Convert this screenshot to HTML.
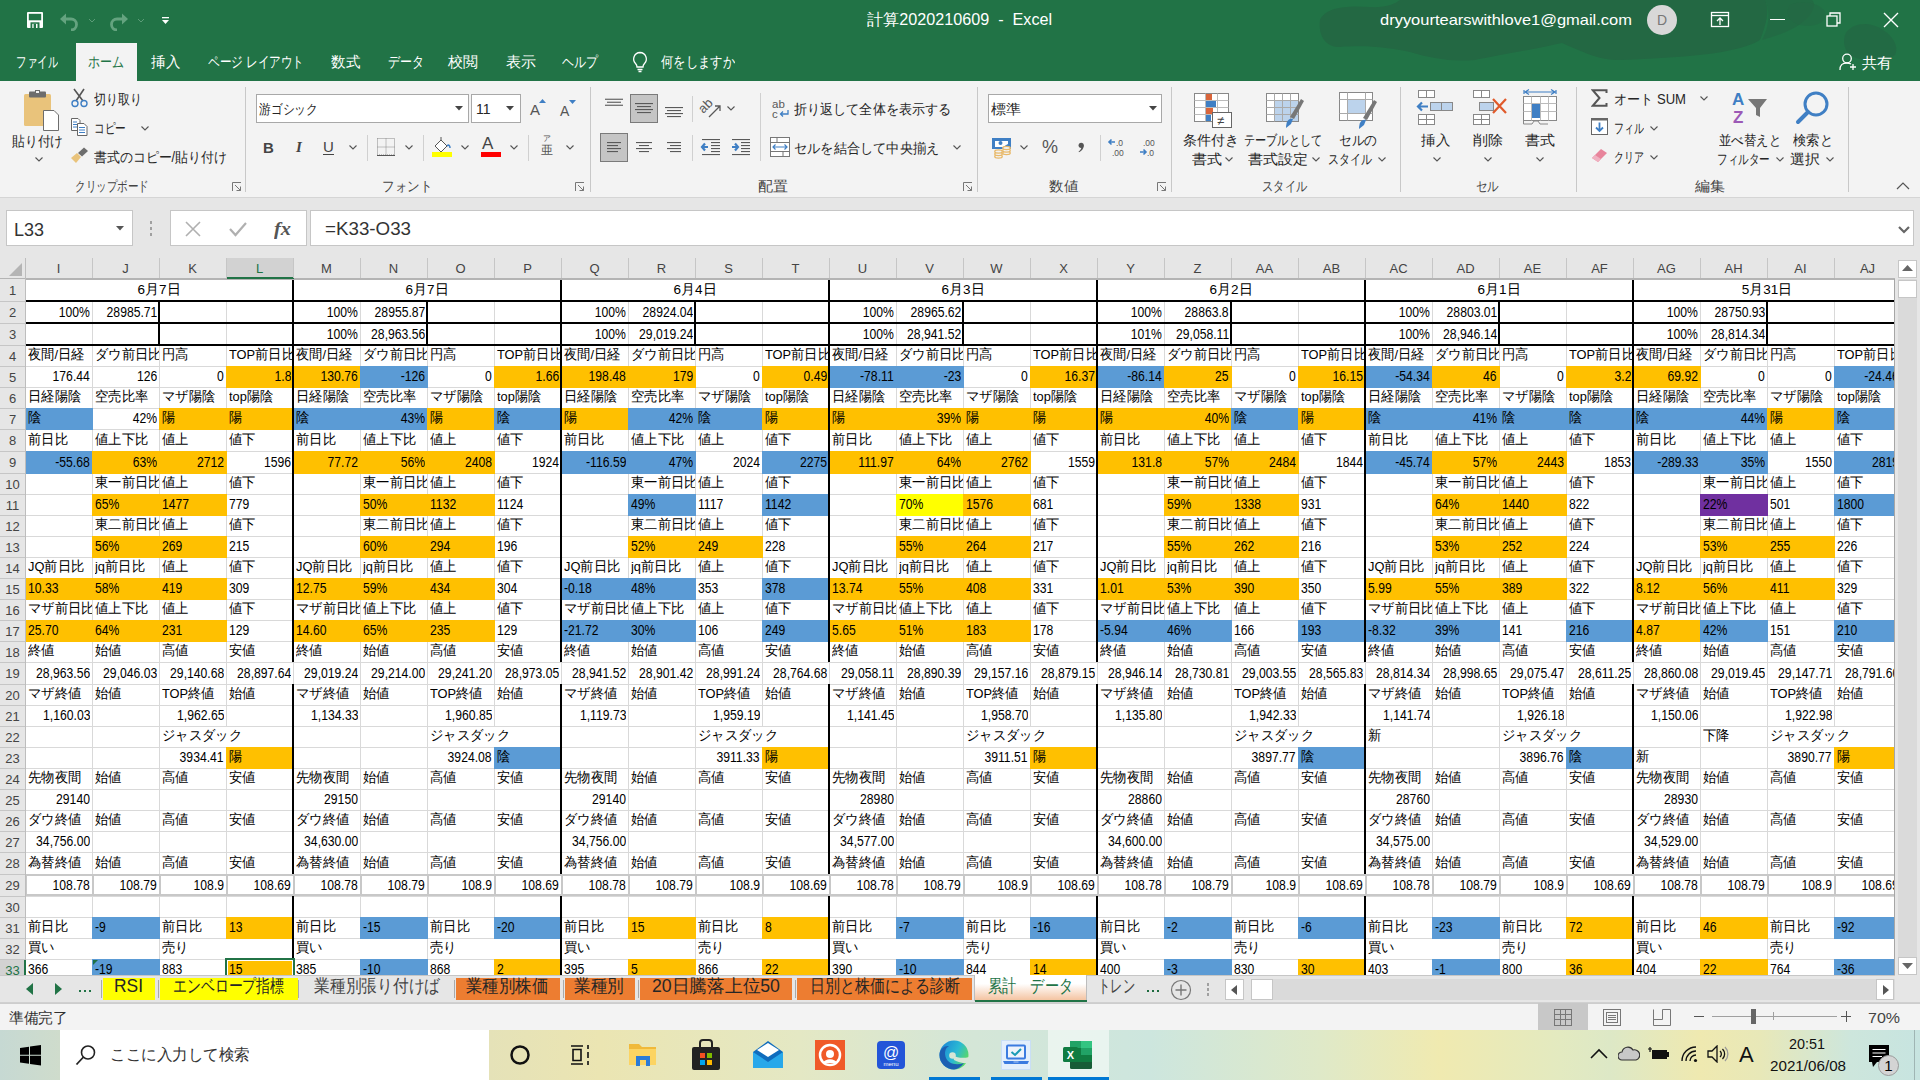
<!DOCTYPE html><html><head><meta charset="utf-8"><style>body{margin:0;width:1920px;height:1080px;overflow:hidden;position:relative;font-family:"Liberation Sans", sans-serif;background:#fff}.c{position:absolute;font-size:13.5px;color:#000;white-space:nowrap;overflow:hidden;display:flex;align-items:center;justify-content:flex-start;box-sizing:border-box;padding-bottom:2px}.c.r{justify-content:flex-end}.c.m{justify-content:center}.c span{display:inline-block;transform:scaleX(.95);transform-origin:0 50%}.c.m span{transform-origin:50% 50%}.n span{font-size:14px;transform:scaleX(.87);transform-origin:0 50%}.r.n span{transform-origin:100% 50%}.h{position:absolute;height:21px;line-height:22px;font-size:13px;text-align:center}</style></head><body><div style="position:absolute;left:0;top:258px;width:1895px;height:717px;overflow:hidden;background:#fff"><svg width="1920" height="717" style="position:absolute;left:0;top:0" shape-rendering="crispEdges"><line x1="26" y1="43.5" x2="1895" y2="43.5" stroke="#d9d9d9" stroke-width="1"/><line x1="26" y1="65.5" x2="1895" y2="65.5" stroke="#d9d9d9" stroke-width="1"/><line x1="26" y1="87.5" x2="1895" y2="87.5" stroke="#d9d9d9" stroke-width="1"/><line x1="26" y1="108.5" x2="1895" y2="108.5" stroke="#d9d9d9" stroke-width="1"/><line x1="26" y1="129.5" x2="1895" y2="129.5" stroke="#d9d9d9" stroke-width="1"/><line x1="26" y1="150.5" x2="1895" y2="150.5" stroke="#d9d9d9" stroke-width="1"/><line x1="26" y1="171.5" x2="1895" y2="171.5" stroke="#d9d9d9" stroke-width="1"/><line x1="26" y1="193.5" x2="1895" y2="193.5" stroke="#d9d9d9" stroke-width="1"/><line x1="26" y1="215.5" x2="1895" y2="215.5" stroke="#d9d9d9" stroke-width="1"/><line x1="26" y1="236.5" x2="1895" y2="236.5" stroke="#d9d9d9" stroke-width="1"/><line x1="26" y1="257.5" x2="1895" y2="257.5" stroke="#d9d9d9" stroke-width="1"/><line x1="26" y1="278.5" x2="1895" y2="278.5" stroke="#d9d9d9" stroke-width="1"/><line x1="26" y1="299.5" x2="1895" y2="299.5" stroke="#d9d9d9" stroke-width="1"/><line x1="26" y1="320.5" x2="1895" y2="320.5" stroke="#d9d9d9" stroke-width="1"/><line x1="26" y1="341.5" x2="1895" y2="341.5" stroke="#d9d9d9" stroke-width="1"/><line x1="26" y1="362.5" x2="1895" y2="362.5" stroke="#d9d9d9" stroke-width="1"/><line x1="26" y1="383.5" x2="1895" y2="383.5" stroke="#d9d9d9" stroke-width="1"/><line x1="26" y1="404.5" x2="1895" y2="404.5" stroke="#d9d9d9" stroke-width="1"/><line x1="26" y1="426.5" x2="1895" y2="426.5" stroke="#d9d9d9" stroke-width="1"/><line x1="26" y1="447.5" x2="1895" y2="447.5" stroke="#d9d9d9" stroke-width="1"/><line x1="26" y1="468.5" x2="1895" y2="468.5" stroke="#d9d9d9" stroke-width="1"/><line x1="26" y1="489.5" x2="1895" y2="489.5" stroke="#d9d9d9" stroke-width="1"/><line x1="26" y1="510.5" x2="1895" y2="510.5" stroke="#d9d9d9" stroke-width="1"/><line x1="26" y1="531.5" x2="1895" y2="531.5" stroke="#d9d9d9" stroke-width="1"/><line x1="26" y1="552.5" x2="1895" y2="552.5" stroke="#d9d9d9" stroke-width="1"/><line x1="26" y1="573.5" x2="1895" y2="573.5" stroke="#d9d9d9" stroke-width="1"/><line x1="26" y1="594.5" x2="1895" y2="594.5" stroke="#d9d9d9" stroke-width="1"/><line x1="26" y1="616.5" x2="1895" y2="616.5" stroke="#d9d9d9" stroke-width="1"/><line x1="26" y1="638.5" x2="1895" y2="638.5" stroke="#d9d9d9" stroke-width="1"/><line x1="26" y1="659.5" x2="1895" y2="659.5" stroke="#d9d9d9" stroke-width="1"/><line x1="26" y1="680.5" x2="1895" y2="680.5" stroke="#d9d9d9" stroke-width="1"/><line x1="26" y1="701.5" x2="1895" y2="701.5" stroke="#d9d9d9" stroke-width="1"/><line x1="26" y1="722.5" x2="1895" y2="722.5" stroke="#d9d9d9" stroke-width="1"/><line x1="92.5" y1="21" x2="92.5" y2="717" stroke="#d9d9d9" stroke-width="1"/><line x1="159.5" y1="21" x2="159.5" y2="717" stroke="#d9d9d9" stroke-width="1"/><line x1="226.5" y1="21" x2="226.5" y2="717" stroke="#d9d9d9" stroke-width="1"/><line x1="293.5" y1="21" x2="293.5" y2="717" stroke="#d9d9d9" stroke-width="1"/><line x1="360.5" y1="21" x2="360.5" y2="717" stroke="#d9d9d9" stroke-width="1"/><line x1="427.5" y1="21" x2="427.5" y2="717" stroke="#d9d9d9" stroke-width="1"/><line x1="494.5" y1="21" x2="494.5" y2="717" stroke="#d9d9d9" stroke-width="1"/><line x1="561.5" y1="21" x2="561.5" y2="717" stroke="#d9d9d9" stroke-width="1"/><line x1="628.5" y1="21" x2="628.5" y2="717" stroke="#d9d9d9" stroke-width="1"/><line x1="695.5" y1="21" x2="695.5" y2="717" stroke="#d9d9d9" stroke-width="1"/><line x1="762.5" y1="21" x2="762.5" y2="717" stroke="#d9d9d9" stroke-width="1"/><line x1="829.5" y1="21" x2="829.5" y2="717" stroke="#d9d9d9" stroke-width="1"/><line x1="896.5" y1="21" x2="896.5" y2="717" stroke="#d9d9d9" stroke-width="1"/><line x1="963.5" y1="21" x2="963.5" y2="717" stroke="#d9d9d9" stroke-width="1"/><line x1="1030.5" y1="21" x2="1030.5" y2="717" stroke="#d9d9d9" stroke-width="1"/><line x1="1097.5" y1="21" x2="1097.5" y2="717" stroke="#d9d9d9" stroke-width="1"/><line x1="1164.5" y1="21" x2="1164.5" y2="717" stroke="#d9d9d9" stroke-width="1"/><line x1="1231.5" y1="21" x2="1231.5" y2="717" stroke="#d9d9d9" stroke-width="1"/><line x1="1298.5" y1="21" x2="1298.5" y2="717" stroke="#d9d9d9" stroke-width="1"/><line x1="1365.5" y1="21" x2="1365.5" y2="717" stroke="#d9d9d9" stroke-width="1"/><line x1="1432.5" y1="21" x2="1432.5" y2="717" stroke="#d9d9d9" stroke-width="1"/><line x1="1499.5" y1="21" x2="1499.5" y2="717" stroke="#d9d9d9" stroke-width="1"/><line x1="1566.5" y1="21" x2="1566.5" y2="717" stroke="#d9d9d9" stroke-width="1"/><line x1="1633.5" y1="21" x2="1633.5" y2="717" stroke="#d9d9d9" stroke-width="1"/><line x1="1700.5" y1="21" x2="1700.5" y2="717" stroke="#d9d9d9" stroke-width="1"/><line x1="1767.5" y1="21" x2="1767.5" y2="717" stroke="#d9d9d9" stroke-width="1"/><line x1="1834.5" y1="21" x2="1834.5" y2="717" stroke="#d9d9d9" stroke-width="1"/><line x1="1901.5" y1="21" x2="1901.5" y2="717" stroke="#d9d9d9" stroke-width="1"/></svg></div><div style="position:absolute;left:26px;top:280px;width:1869px;height:21px;background:#fff"></div><div style="position:absolute;left:226px;top:727px;width:1px;height:20px;background:#fff"></div><div style="position:absolute;left:92px;top:939px;width:1px;height:20px;background:#fff"></div><div style="position:absolute;left:226px;top:939px;width:1px;height:20px;background:#fff"></div><div style="position:absolute;left:494px;top:727px;width:1px;height:20px;background:#fff"></div><div style="position:absolute;left:360px;top:939px;width:1px;height:20px;background:#fff"></div><div style="position:absolute;left:494px;top:939px;width:1px;height:20px;background:#fff"></div><div style="position:absolute;left:762px;top:727px;width:1px;height:20px;background:#fff"></div><div style="position:absolute;left:628px;top:939px;width:1px;height:20px;background:#fff"></div><div style="position:absolute;left:762px;top:939px;width:1px;height:20px;background:#fff"></div><div style="position:absolute;left:1030px;top:727px;width:1px;height:20px;background:#fff"></div><div style="position:absolute;left:896px;top:939px;width:1px;height:20px;background:#fff"></div><div style="position:absolute;left:1030px;top:939px;width:1px;height:20px;background:#fff"></div><div style="position:absolute;left:1298px;top:727px;width:1px;height:20px;background:#fff"></div><div style="position:absolute;left:1164px;top:939px;width:1px;height:20px;background:#fff"></div><div style="position:absolute;left:1298px;top:939px;width:1px;height:20px;background:#fff"></div><div style="position:absolute;left:1566px;top:727px;width:1px;height:20px;background:#fff"></div><div style="position:absolute;left:1432px;top:939px;width:1px;height:20px;background:#fff"></div><div style="position:absolute;left:1566px;top:939px;width:1px;height:20px;background:#fff"></div><div style="position:absolute;left:1834px;top:727px;width:1px;height:20px;background:#fff"></div><div style="position:absolute;left:1700px;top:939px;width:1px;height:20px;background:#fff"></div><div style="position:absolute;left:1834px;top:939px;width:1px;height:20px;background:#fff"></div><div style="position:absolute;left:226px;top:366px;width:68px;height:22px;background:#ffc000"></div><div style="position:absolute;left:25px;top:408px;width:68px;height:22px;background:#5b9bd5"></div><div style="position:absolute;left:159px;top:408px;width:68px;height:22px;background:#ffc000"></div><div style="position:absolute;left:226px;top:408px;width:68px;height:22px;background:#ffc000"></div><div style="position:absolute;left:25px;top:451px;width:68px;height:23px;background:#5b9bd5"></div><div style="position:absolute;left:92px;top:451px;width:68px;height:23px;background:#ffc000"></div><div style="position:absolute;left:159px;top:451px;width:68px;height:23px;background:#ffc000"></div><div style="position:absolute;left:92px;top:494px;width:68px;height:22px;background:#ffc000"></div><div style="position:absolute;left:159px;top:494px;width:68px;height:22px;background:#ffc000"></div><div style="position:absolute;left:92px;top:536px;width:68px;height:22px;background:#ffc000"></div><div style="position:absolute;left:159px;top:536px;width:68px;height:22px;background:#ffc000"></div><div style="position:absolute;left:25px;top:578px;width:68px;height:22px;background:#ffc000"></div><div style="position:absolute;left:92px;top:578px;width:68px;height:22px;background:#ffc000"></div><div style="position:absolute;left:159px;top:578px;width:68px;height:22px;background:#ffc000"></div><div style="position:absolute;left:25px;top:620px;width:68px;height:22px;background:#ffc000"></div><div style="position:absolute;left:92px;top:620px;width:68px;height:22px;background:#ffc000"></div><div style="position:absolute;left:159px;top:620px;width:68px;height:22px;background:#ffc000"></div><div style="position:absolute;left:226px;top:747px;width:68px;height:22px;background:#ffc000"></div><div style="position:absolute;left:92px;top:917px;width:68px;height:22px;background:#5b9bd5"></div><div style="position:absolute;left:226px;top:917px;width:68px;height:22px;background:#ffc000"></div><div style="position:absolute;left:92px;top:959px;width:68px;height:22px;background:#5b9bd5"></div><div style="position:absolute;left:226px;top:959px;width:68px;height:22px;background:#ffc000"></div><div style="position:absolute;left:293px;top:366px;width:68px;height:22px;background:#ffc000"></div><div style="position:absolute;left:360px;top:366px;width:68px;height:22px;background:#5b9bd5"></div><div style="position:absolute;left:494px;top:366px;width:68px;height:22px;background:#ffc000"></div><div style="position:absolute;left:293px;top:408px;width:68px;height:22px;background:#5b9bd5"></div><div style="position:absolute;left:360px;top:408px;width:68px;height:22px;background:#5b9bd5"></div><div style="position:absolute;left:427px;top:408px;width:68px;height:22px;background:#ffc000"></div><div style="position:absolute;left:494px;top:408px;width:68px;height:22px;background:#5b9bd5"></div><div style="position:absolute;left:293px;top:451px;width:68px;height:23px;background:#ffc000"></div><div style="position:absolute;left:360px;top:451px;width:68px;height:23px;background:#ffc000"></div><div style="position:absolute;left:427px;top:451px;width:68px;height:23px;background:#ffc000"></div><div style="position:absolute;left:360px;top:494px;width:68px;height:22px;background:#ffc000"></div><div style="position:absolute;left:427px;top:494px;width:68px;height:22px;background:#ffc000"></div><div style="position:absolute;left:360px;top:536px;width:68px;height:22px;background:#ffc000"></div><div style="position:absolute;left:427px;top:536px;width:68px;height:22px;background:#ffc000"></div><div style="position:absolute;left:293px;top:578px;width:68px;height:22px;background:#ffc000"></div><div style="position:absolute;left:360px;top:578px;width:68px;height:22px;background:#ffc000"></div><div style="position:absolute;left:427px;top:578px;width:68px;height:22px;background:#ffc000"></div><div style="position:absolute;left:293px;top:620px;width:68px;height:22px;background:#ffc000"></div><div style="position:absolute;left:360px;top:620px;width:68px;height:22px;background:#ffc000"></div><div style="position:absolute;left:427px;top:620px;width:68px;height:22px;background:#ffc000"></div><div style="position:absolute;left:494px;top:747px;width:68px;height:22px;background:#5b9bd5"></div><div style="position:absolute;left:360px;top:917px;width:68px;height:22px;background:#5b9bd5"></div><div style="position:absolute;left:494px;top:917px;width:68px;height:22px;background:#5b9bd5"></div><div style="position:absolute;left:360px;top:959px;width:68px;height:22px;background:#5b9bd5"></div><div style="position:absolute;left:494px;top:959px;width:68px;height:22px;background:#ffc000"></div><div style="position:absolute;left:561px;top:366px;width:68px;height:22px;background:#ffc000"></div><div style="position:absolute;left:628px;top:366px;width:68px;height:22px;background:#ffc000"></div><div style="position:absolute;left:762px;top:366px;width:68px;height:22px;background:#ffc000"></div><div style="position:absolute;left:561px;top:408px;width:68px;height:22px;background:#ffc000"></div><div style="position:absolute;left:628px;top:408px;width:68px;height:22px;background:#5b9bd5"></div><div style="position:absolute;left:695px;top:408px;width:68px;height:22px;background:#5b9bd5"></div><div style="position:absolute;left:762px;top:408px;width:68px;height:22px;background:#ffc000"></div><div style="position:absolute;left:561px;top:451px;width:68px;height:23px;background:#5b9bd5"></div><div style="position:absolute;left:628px;top:451px;width:68px;height:23px;background:#5b9bd5"></div><div style="position:absolute;left:762px;top:451px;width:68px;height:23px;background:#5b9bd5"></div><div style="position:absolute;left:628px;top:494px;width:68px;height:22px;background:#5b9bd5"></div><div style="position:absolute;left:762px;top:494px;width:68px;height:22px;background:#5b9bd5"></div><div style="position:absolute;left:628px;top:536px;width:68px;height:22px;background:#ffc000"></div><div style="position:absolute;left:695px;top:536px;width:68px;height:22px;background:#ffc000"></div><div style="position:absolute;left:561px;top:578px;width:68px;height:22px;background:#5b9bd5"></div><div style="position:absolute;left:628px;top:578px;width:68px;height:22px;background:#5b9bd5"></div><div style="position:absolute;left:762px;top:578px;width:68px;height:22px;background:#5b9bd5"></div><div style="position:absolute;left:561px;top:620px;width:68px;height:22px;background:#5b9bd5"></div><div style="position:absolute;left:628px;top:620px;width:68px;height:22px;background:#5b9bd5"></div><div style="position:absolute;left:762px;top:620px;width:68px;height:22px;background:#5b9bd5"></div><div style="position:absolute;left:762px;top:747px;width:68px;height:22px;background:#ffc000"></div><div style="position:absolute;left:628px;top:917px;width:68px;height:22px;background:#ffc000"></div><div style="position:absolute;left:762px;top:917px;width:68px;height:22px;background:#ffc000"></div><div style="position:absolute;left:628px;top:959px;width:68px;height:22px;background:#ffc000"></div><div style="position:absolute;left:762px;top:959px;width:68px;height:22px;background:#ffc000"></div><div style="position:absolute;left:829px;top:366px;width:68px;height:22px;background:#5b9bd5"></div><div style="position:absolute;left:896px;top:366px;width:68px;height:22px;background:#5b9bd5"></div><div style="position:absolute;left:1030px;top:366px;width:68px;height:22px;background:#ffc000"></div><div style="position:absolute;left:829px;top:408px;width:68px;height:22px;background:#ffc000"></div><div style="position:absolute;left:896px;top:408px;width:68px;height:22px;background:#ffc000"></div><div style="position:absolute;left:963px;top:408px;width:68px;height:22px;background:#ffc000"></div><div style="position:absolute;left:1030px;top:408px;width:68px;height:22px;background:#ffc000"></div><div style="position:absolute;left:829px;top:451px;width:68px;height:23px;background:#ffc000"></div><div style="position:absolute;left:896px;top:451px;width:68px;height:23px;background:#ffc000"></div><div style="position:absolute;left:963px;top:451px;width:68px;height:23px;background:#ffc000"></div><div style="position:absolute;left:896px;top:494px;width:68px;height:22px;background:#ffff00"></div><div style="position:absolute;left:963px;top:494px;width:68px;height:22px;background:#ffc000"></div><div style="position:absolute;left:896px;top:536px;width:68px;height:22px;background:#ffc000"></div><div style="position:absolute;left:963px;top:536px;width:68px;height:22px;background:#ffc000"></div><div style="position:absolute;left:829px;top:578px;width:68px;height:22px;background:#ffc000"></div><div style="position:absolute;left:896px;top:578px;width:68px;height:22px;background:#ffc000"></div><div style="position:absolute;left:963px;top:578px;width:68px;height:22px;background:#ffc000"></div><div style="position:absolute;left:829px;top:620px;width:68px;height:22px;background:#ffc000"></div><div style="position:absolute;left:896px;top:620px;width:68px;height:22px;background:#ffc000"></div><div style="position:absolute;left:963px;top:620px;width:68px;height:22px;background:#ffc000"></div><div style="position:absolute;left:1030px;top:747px;width:68px;height:22px;background:#ffc000"></div><div style="position:absolute;left:896px;top:917px;width:68px;height:22px;background:#5b9bd5"></div><div style="position:absolute;left:1030px;top:917px;width:68px;height:22px;background:#5b9bd5"></div><div style="position:absolute;left:896px;top:959px;width:68px;height:22px;background:#5b9bd5"></div><div style="position:absolute;left:1030px;top:959px;width:68px;height:22px;background:#ffc000"></div><div style="position:absolute;left:1097px;top:366px;width:68px;height:22px;background:#5b9bd5"></div><div style="position:absolute;left:1164px;top:366px;width:68px;height:22px;background:#ffc000"></div><div style="position:absolute;left:1298px;top:366px;width:68px;height:22px;background:#ffc000"></div><div style="position:absolute;left:1097px;top:408px;width:68px;height:22px;background:#ffc000"></div><div style="position:absolute;left:1164px;top:408px;width:68px;height:22px;background:#ffc000"></div><div style="position:absolute;left:1231px;top:408px;width:68px;height:22px;background:#5b9bd5"></div><div style="position:absolute;left:1298px;top:408px;width:68px;height:22px;background:#ffc000"></div><div style="position:absolute;left:1097px;top:451px;width:68px;height:23px;background:#ffc000"></div><div style="position:absolute;left:1164px;top:451px;width:68px;height:23px;background:#ffc000"></div><div style="position:absolute;left:1231px;top:451px;width:68px;height:23px;background:#ffc000"></div><div style="position:absolute;left:1164px;top:494px;width:68px;height:22px;background:#ffc000"></div><div style="position:absolute;left:1231px;top:494px;width:68px;height:22px;background:#ffc000"></div><div style="position:absolute;left:1164px;top:536px;width:68px;height:22px;background:#ffc000"></div><div style="position:absolute;left:1231px;top:536px;width:68px;height:22px;background:#ffc000"></div><div style="position:absolute;left:1097px;top:578px;width:68px;height:22px;background:#ffc000"></div><div style="position:absolute;left:1164px;top:578px;width:68px;height:22px;background:#ffc000"></div><div style="position:absolute;left:1231px;top:578px;width:68px;height:22px;background:#ffc000"></div><div style="position:absolute;left:1097px;top:620px;width:68px;height:22px;background:#5b9bd5"></div><div style="position:absolute;left:1164px;top:620px;width:68px;height:22px;background:#5b9bd5"></div><div style="position:absolute;left:1298px;top:620px;width:68px;height:22px;background:#5b9bd5"></div><div style="position:absolute;left:1298px;top:747px;width:68px;height:22px;background:#5b9bd5"></div><div style="position:absolute;left:1164px;top:917px;width:68px;height:22px;background:#5b9bd5"></div><div style="position:absolute;left:1298px;top:917px;width:68px;height:22px;background:#5b9bd5"></div><div style="position:absolute;left:1164px;top:959px;width:68px;height:22px;background:#5b9bd5"></div><div style="position:absolute;left:1298px;top:959px;width:68px;height:22px;background:#ffc000"></div><div style="position:absolute;left:1365px;top:366px;width:68px;height:22px;background:#5b9bd5"></div><div style="position:absolute;left:1432px;top:366px;width:68px;height:22px;background:#ffc000"></div><div style="position:absolute;left:1566px;top:366px;width:68px;height:22px;background:#ffc000"></div><div style="position:absolute;left:1365px;top:408px;width:68px;height:22px;background:#5b9bd5"></div><div style="position:absolute;left:1432px;top:408px;width:68px;height:22px;background:#5b9bd5"></div><div style="position:absolute;left:1499px;top:408px;width:68px;height:22px;background:#5b9bd5"></div><div style="position:absolute;left:1566px;top:408px;width:68px;height:22px;background:#5b9bd5"></div><div style="position:absolute;left:1365px;top:451px;width:68px;height:23px;background:#5b9bd5"></div><div style="position:absolute;left:1432px;top:451px;width:68px;height:23px;background:#ffc000"></div><div style="position:absolute;left:1499px;top:451px;width:68px;height:23px;background:#ffc000"></div><div style="position:absolute;left:1432px;top:494px;width:68px;height:22px;background:#ffc000"></div><div style="position:absolute;left:1499px;top:494px;width:68px;height:22px;background:#ffc000"></div><div style="position:absolute;left:1432px;top:536px;width:68px;height:22px;background:#ffc000"></div><div style="position:absolute;left:1499px;top:536px;width:68px;height:22px;background:#ffc000"></div><div style="position:absolute;left:1365px;top:578px;width:68px;height:22px;background:#ffc000"></div><div style="position:absolute;left:1432px;top:578px;width:68px;height:22px;background:#ffc000"></div><div style="position:absolute;left:1499px;top:578px;width:68px;height:22px;background:#ffc000"></div><div style="position:absolute;left:1365px;top:620px;width:68px;height:22px;background:#5b9bd5"></div><div style="position:absolute;left:1432px;top:620px;width:68px;height:22px;background:#5b9bd5"></div><div style="position:absolute;left:1566px;top:620px;width:68px;height:22px;background:#5b9bd5"></div><div style="position:absolute;left:1566px;top:747px;width:68px;height:22px;background:#5b9bd5"></div><div style="position:absolute;left:1432px;top:917px;width:68px;height:22px;background:#5b9bd5"></div><div style="position:absolute;left:1566px;top:917px;width:68px;height:22px;background:#ffc000"></div><div style="position:absolute;left:1432px;top:959px;width:68px;height:22px;background:#5b9bd5"></div><div style="position:absolute;left:1566px;top:959px;width:68px;height:22px;background:#ffc000"></div><div style="position:absolute;left:1633px;top:366px;width:68px;height:22px;background:#ffc000"></div><div style="position:absolute;left:1834px;top:366px;width:68px;height:22px;background:#5b9bd5"></div><div style="position:absolute;left:1633px;top:408px;width:68px;height:22px;background:#5b9bd5"></div><div style="position:absolute;left:1700px;top:408px;width:68px;height:22px;background:#5b9bd5"></div><div style="position:absolute;left:1767px;top:408px;width:68px;height:22px;background:#ffc000"></div><div style="position:absolute;left:1834px;top:408px;width:68px;height:22px;background:#5b9bd5"></div><div style="position:absolute;left:1633px;top:451px;width:68px;height:23px;background:#5b9bd5"></div><div style="position:absolute;left:1700px;top:451px;width:68px;height:23px;background:#5b9bd5"></div><div style="position:absolute;left:1834px;top:451px;width:68px;height:23px;background:#5b9bd5"></div><div style="position:absolute;left:1700px;top:494px;width:68px;height:22px;background:#7030a0"></div><div style="position:absolute;left:1834px;top:494px;width:68px;height:22px;background:#5b9bd5"></div><div style="position:absolute;left:1700px;top:536px;width:68px;height:22px;background:#ffc000"></div><div style="position:absolute;left:1767px;top:536px;width:68px;height:22px;background:#ffc000"></div><div style="position:absolute;left:1633px;top:578px;width:68px;height:22px;background:#ffc000"></div><div style="position:absolute;left:1700px;top:578px;width:68px;height:22px;background:#ffc000"></div><div style="position:absolute;left:1767px;top:578px;width:68px;height:22px;background:#ffc000"></div><div style="position:absolute;left:1633px;top:620px;width:68px;height:22px;background:#ffc000"></div><div style="position:absolute;left:1700px;top:620px;width:68px;height:22px;background:#5b9bd5"></div><div style="position:absolute;left:1834px;top:620px;width:68px;height:22px;background:#5b9bd5"></div><div style="position:absolute;left:1834px;top:747px;width:68px;height:22px;background:#ffc000"></div><div style="position:absolute;left:1700px;top:917px;width:68px;height:22px;background:#ffc000"></div><div style="position:absolute;left:1834px;top:917px;width:68px;height:22px;background:#5b9bd5"></div><div style="position:absolute;left:1700px;top:959px;width:68px;height:22px;background:#ffc000"></div><div style="position:absolute;left:1834px;top:959px;width:68px;height:22px;background:#5b9bd5"></div><div class="c m" style="left:25px;top:279px;width:268px;height:23px">6月7日</div><div class="c n r" style="left:27px;top:301px;width:63px;height:23px"><span>100%</span></div><div class="c n r" style="left:94px;top:301px;width:63px;height:23px"><span>28985.71</span></div><div class="c" style="left:28px;top:345px;width:64px;height:22px"><span>夜間/日経</span></div><div class="c" style="left:95px;top:345px;width:64px;height:22px"><span>ダウ前日比</span></div><div class="c" style="left:162px;top:345px;width:64px;height:22px"><span>円高</span></div><div class="c" style="left:229px;top:345px;width:64px;height:22px"><span>TOP前日比</span></div><div class="c n r" style="left:27px;top:366px;width:63px;height:22px"><span>176.44</span></div><div class="c n r" style="left:94px;top:366px;width:63px;height:22px"><span>126</span></div><div class="c n r" style="left:161px;top:366px;width:63px;height:22px"><span>0</span></div><div class="c n r" style="left:228px;top:366px;width:63px;height:22px"><span>1.8</span></div><div class="c" style="left:28px;top:387px;width:64px;height:22px"><span>日経陽陰</span></div><div class="c" style="left:95px;top:387px;width:64px;height:22px"><span>空売比率</span></div><div class="c" style="left:162px;top:387px;width:64px;height:22px"><span>マザ陽陰</span></div><div class="c" style="left:229px;top:387px;width:64px;height:22px"><span>top陽陰</span></div><div class="c" style="left:28px;top:408px;width:64px;height:22px"><span>陰</span></div><div class="c n r" style="left:94px;top:408px;width:63px;height:22px"><span>42%</span></div><div class="c" style="left:162px;top:408px;width:64px;height:22px"><span>陽</span></div><div class="c" style="left:229px;top:408px;width:64px;height:22px"><span>陽</span></div><div class="c" style="left:28px;top:429px;width:64px;height:23px"><span>前日比</span></div><div class="c" style="left:95px;top:429px;width:64px;height:23px"><span>値上下比</span></div><div class="c" style="left:162px;top:429px;width:64px;height:23px"><span>値上</span></div><div class="c" style="left:229px;top:429px;width:64px;height:23px"><span>値下</span></div><div class="c n r" style="left:27px;top:451px;width:63px;height:23px"><span>-55.68</span></div><div class="c n r" style="left:94px;top:451px;width:63px;height:23px"><span>63%</span></div><div class="c n r" style="left:161px;top:451px;width:63px;height:23px"><span>2712</span></div><div class="c n r" style="left:228px;top:451px;width:63px;height:23px"><span>1596</span></div><div class="c" style="left:95px;top:473px;width:64px;height:22px"><span>東一前日比</span></div><div class="c" style="left:162px;top:473px;width:64px;height:22px"><span>値上</span></div><div class="c" style="left:229px;top:473px;width:64px;height:22px"><span>値下</span></div><div class="c n" style="left:95px;top:494px;width:64px;height:22px"><span>65%</span></div><div class="c n" style="left:162px;top:494px;width:64px;height:22px"><span>1477</span></div><div class="c n" style="left:229px;top:494px;width:64px;height:22px"><span>779</span></div><div class="c" style="left:95px;top:515px;width:64px;height:22px"><span>東二前日比</span></div><div class="c" style="left:162px;top:515px;width:64px;height:22px"><span>値上</span></div><div class="c" style="left:229px;top:515px;width:64px;height:22px"><span>値下</span></div><div class="c n" style="left:95px;top:536px;width:64px;height:22px"><span>56%</span></div><div class="c n" style="left:162px;top:536px;width:64px;height:22px"><span>269</span></div><div class="c n" style="left:229px;top:536px;width:64px;height:22px"><span>215</span></div><div class="c" style="left:28px;top:557px;width:64px;height:22px"><span>JQ前日比</span></div><div class="c" style="left:95px;top:557px;width:64px;height:22px"><span>jq前日比</span></div><div class="c" style="left:162px;top:557px;width:64px;height:22px"><span>値上</span></div><div class="c" style="left:229px;top:557px;width:64px;height:22px"><span>値下</span></div><div class="c n" style="left:28px;top:578px;width:64px;height:22px"><span>10.33</span></div><div class="c n" style="left:95px;top:578px;width:64px;height:22px"><span>58%</span></div><div class="c n" style="left:162px;top:578px;width:64px;height:22px"><span>419</span></div><div class="c n" style="left:229px;top:578px;width:64px;height:22px"><span>309</span></div><div class="c" style="left:28px;top:599px;width:64px;height:22px"><span>マザ前日比</span></div><div class="c" style="left:95px;top:599px;width:64px;height:22px"><span>値上下比</span></div><div class="c" style="left:162px;top:599px;width:64px;height:22px"><span>値上</span></div><div class="c" style="left:229px;top:599px;width:64px;height:22px"><span>値下</span></div><div class="c n" style="left:28px;top:620px;width:64px;height:22px"><span>25.70</span></div><div class="c n" style="left:95px;top:620px;width:64px;height:22px"><span>64%</span></div><div class="c n" style="left:162px;top:620px;width:64px;height:22px"><span>231</span></div><div class="c n" style="left:229px;top:620px;width:64px;height:22px"><span>129</span></div><div class="c" style="left:28px;top:641px;width:64px;height:22px"><span>終値</span></div><div class="c" style="left:95px;top:641px;width:64px;height:22px"><span>始値</span></div><div class="c" style="left:162px;top:641px;width:64px;height:22px"><span>高値</span></div><div class="c" style="left:229px;top:641px;width:64px;height:22px"><span>安値</span></div><div class="c n r" style="left:27px;top:662px;width:63px;height:23px"><span>28,963.56</span></div><div class="c n r" style="left:94px;top:662px;width:63px;height:23px"><span>29,046.03</span></div><div class="c n r" style="left:161px;top:662px;width:63px;height:23px"><span>29,140.68</span></div><div class="c n r" style="left:228px;top:662px;width:63px;height:23px"><span>28,897.64</span></div><div class="c" style="left:28px;top:684px;width:64px;height:22px"><span>マザ終値</span></div><div class="c" style="left:95px;top:684px;width:64px;height:22px"><span>始値</span></div><div class="c" style="left:162px;top:684px;width:64px;height:22px"><span>TOP終値</span></div><div class="c" style="left:229px;top:684px;width:64px;height:22px"><span>始値</span></div><div class="c n r" style="left:27px;top:705px;width:63px;height:22px"><span>1,160.03</span></div><div class="c n r" style="left:161px;top:705px;width:63px;height:22px"><span>1,962.65</span></div><div class="c" style="left:162px;top:726px;width:131px;height:22px"><span>ジャスダック</span></div><div class="c n r" style="left:161px;top:747px;width:63px;height:22px"><span>3934.41</span></div><div class="c" style="left:229px;top:747px;width:64px;height:22px"><span>陽</span></div><div class="c" style="left:28px;top:768px;width:64px;height:22px"><span>先物夜間</span></div><div class="c" style="left:95px;top:768px;width:64px;height:22px"><span>始値</span></div><div class="c" style="left:162px;top:768px;width:64px;height:22px"><span>高値</span></div><div class="c" style="left:229px;top:768px;width:64px;height:22px"><span>安値</span></div><div class="c n r" style="left:27px;top:789px;width:63px;height:22px"><span>29140</span></div><div class="c" style="left:28px;top:810px;width:64px;height:22px"><span>ダウ終値</span></div><div class="c" style="left:95px;top:810px;width:64px;height:22px"><span>始値</span></div><div class="c" style="left:162px;top:810px;width:64px;height:22px"><span>高値</span></div><div class="c" style="left:229px;top:810px;width:64px;height:22px"><span>安値</span></div><div class="c n r" style="left:27px;top:831px;width:63px;height:22px"><span>34,756.00</span></div><div class="c" style="left:28px;top:852px;width:64px;height:23px"><span>為替終値</span></div><div class="c" style="left:95px;top:852px;width:64px;height:23px"><span>始値</span></div><div class="c" style="left:162px;top:852px;width:64px;height:23px"><span>高値</span></div><div class="c" style="left:229px;top:852px;width:64px;height:23px"><span>安値</span></div><div class="c n t r" style="left:27px;top:874px;width:63px;height:23px"><span>108.78</span></div><div class="c n t r" style="left:94px;top:874px;width:63px;height:23px"><span>108.79</span></div><div class="c n t r" style="left:161px;top:874px;width:63px;height:23px"><span>108.9</span></div><div class="c n t r" style="left:228px;top:874px;width:63px;height:23px"><span>108.69</span></div><div class="c" style="left:28px;top:917px;width:64px;height:22px"><span>前日比</span></div><div class="c n" style="left:95px;top:917px;width:64px;height:22px"><span>-9</span></div><div class="c" style="left:162px;top:917px;width:64px;height:22px"><span>前日比</span></div><div class="c n" style="left:229px;top:917px;width:64px;height:22px"><span>13</span></div><div class="c" style="left:28px;top:938px;width:64px;height:22px"><span>買い</span></div><div class="c" style="left:162px;top:938px;width:64px;height:22px"><span>売り</span></div><div class="c n" style="left:28px;top:959px;width:64px;height:22px"><span>366</span></div><div class="c n" style="left:95px;top:959px;width:64px;height:22px"><span>-19</span></div><div class="c n" style="left:162px;top:959px;width:64px;height:22px"><span>883</span></div><div class="c n" style="left:229px;top:959px;width:64px;height:22px"><span>15</span></div><div class="c m" style="left:293px;top:279px;width:268px;height:23px">6月7日</div><div class="c n r" style="left:295px;top:301px;width:63px;height:23px"><span>100%</span></div><div class="c n r" style="left:362px;top:301px;width:63px;height:23px"><span>28955.87</span></div><div class="c n r" style="left:295px;top:323px;width:63px;height:23px"><span>100%</span></div><div class="c n r" style="left:362px;top:323px;width:63px;height:23px"><span>28,963.56</span></div><div class="c" style="left:296px;top:345px;width:64px;height:22px"><span>夜間/日経</span></div><div class="c" style="left:363px;top:345px;width:64px;height:22px"><span>ダウ前日比</span></div><div class="c" style="left:430px;top:345px;width:64px;height:22px"><span>円高</span></div><div class="c" style="left:497px;top:345px;width:64px;height:22px"><span>TOP前日比</span></div><div class="c n r" style="left:295px;top:366px;width:63px;height:22px"><span>130.76</span></div><div class="c n r" style="left:362px;top:366px;width:63px;height:22px"><span>-126</span></div><div class="c n r" style="left:429px;top:366px;width:63px;height:22px"><span>0</span></div><div class="c n r" style="left:496px;top:366px;width:63px;height:22px"><span>1.66</span></div><div class="c" style="left:296px;top:387px;width:64px;height:22px"><span>日経陽陰</span></div><div class="c" style="left:363px;top:387px;width:64px;height:22px"><span>空売比率</span></div><div class="c" style="left:430px;top:387px;width:64px;height:22px"><span>マザ陽陰</span></div><div class="c" style="left:497px;top:387px;width:64px;height:22px"><span>top陽陰</span></div><div class="c" style="left:296px;top:408px;width:64px;height:22px"><span>陰</span></div><div class="c n r" style="left:362px;top:408px;width:63px;height:22px"><span>43%</span></div><div class="c" style="left:430px;top:408px;width:64px;height:22px"><span>陽</span></div><div class="c" style="left:497px;top:408px;width:64px;height:22px"><span>陰</span></div><div class="c" style="left:296px;top:429px;width:64px;height:23px"><span>前日比</span></div><div class="c" style="left:363px;top:429px;width:64px;height:23px"><span>値上下比</span></div><div class="c" style="left:430px;top:429px;width:64px;height:23px"><span>値上</span></div><div class="c" style="left:497px;top:429px;width:64px;height:23px"><span>値下</span></div><div class="c n r" style="left:295px;top:451px;width:63px;height:23px"><span>77.72</span></div><div class="c n r" style="left:362px;top:451px;width:63px;height:23px"><span>56%</span></div><div class="c n r" style="left:429px;top:451px;width:63px;height:23px"><span>2408</span></div><div class="c n r" style="left:496px;top:451px;width:63px;height:23px"><span>1924</span></div><div class="c" style="left:363px;top:473px;width:64px;height:22px"><span>東一前日比</span></div><div class="c" style="left:430px;top:473px;width:64px;height:22px"><span>値上</span></div><div class="c" style="left:497px;top:473px;width:64px;height:22px"><span>値下</span></div><div class="c n" style="left:363px;top:494px;width:64px;height:22px"><span>50%</span></div><div class="c n" style="left:430px;top:494px;width:64px;height:22px"><span>1132</span></div><div class="c n" style="left:497px;top:494px;width:64px;height:22px"><span>1124</span></div><div class="c" style="left:363px;top:515px;width:64px;height:22px"><span>東二前日比</span></div><div class="c" style="left:430px;top:515px;width:64px;height:22px"><span>値上</span></div><div class="c" style="left:497px;top:515px;width:64px;height:22px"><span>値下</span></div><div class="c n" style="left:363px;top:536px;width:64px;height:22px"><span>60%</span></div><div class="c n" style="left:430px;top:536px;width:64px;height:22px"><span>294</span></div><div class="c n" style="left:497px;top:536px;width:64px;height:22px"><span>196</span></div><div class="c" style="left:296px;top:557px;width:64px;height:22px"><span>JQ前日比</span></div><div class="c" style="left:363px;top:557px;width:64px;height:22px"><span>jq前日比</span></div><div class="c" style="left:430px;top:557px;width:64px;height:22px"><span>値上</span></div><div class="c" style="left:497px;top:557px;width:64px;height:22px"><span>値下</span></div><div class="c n" style="left:296px;top:578px;width:64px;height:22px"><span>12.75</span></div><div class="c n" style="left:363px;top:578px;width:64px;height:22px"><span>59%</span></div><div class="c n" style="left:430px;top:578px;width:64px;height:22px"><span>434</span></div><div class="c n" style="left:497px;top:578px;width:64px;height:22px"><span>304</span></div><div class="c" style="left:296px;top:599px;width:64px;height:22px"><span>マザ前日比</span></div><div class="c" style="left:363px;top:599px;width:64px;height:22px"><span>値上下比</span></div><div class="c" style="left:430px;top:599px;width:64px;height:22px"><span>値上</span></div><div class="c" style="left:497px;top:599px;width:64px;height:22px"><span>値下</span></div><div class="c n" style="left:296px;top:620px;width:64px;height:22px"><span>14.60</span></div><div class="c n" style="left:363px;top:620px;width:64px;height:22px"><span>65%</span></div><div class="c n" style="left:430px;top:620px;width:64px;height:22px"><span>235</span></div><div class="c n" style="left:497px;top:620px;width:64px;height:22px"><span>129</span></div><div class="c" style="left:296px;top:641px;width:64px;height:22px"><span>終値</span></div><div class="c" style="left:363px;top:641px;width:64px;height:22px"><span>始値</span></div><div class="c" style="left:430px;top:641px;width:64px;height:22px"><span>高値</span></div><div class="c" style="left:497px;top:641px;width:64px;height:22px"><span>安値</span></div><div class="c n r" style="left:295px;top:662px;width:63px;height:23px"><span>29,019.24</span></div><div class="c n r" style="left:362px;top:662px;width:63px;height:23px"><span>29,214.00</span></div><div class="c n r" style="left:429px;top:662px;width:63px;height:23px"><span>29,241.20</span></div><div class="c n r" style="left:496px;top:662px;width:63px;height:23px"><span>28,973.05</span></div><div class="c" style="left:296px;top:684px;width:64px;height:22px"><span>マザ終値</span></div><div class="c" style="left:363px;top:684px;width:64px;height:22px"><span>始値</span></div><div class="c" style="left:430px;top:684px;width:64px;height:22px"><span>TOP終値</span></div><div class="c" style="left:497px;top:684px;width:64px;height:22px"><span>始値</span></div><div class="c n r" style="left:295px;top:705px;width:63px;height:22px"><span>1,134.33</span></div><div class="c n r" style="left:429px;top:705px;width:63px;height:22px"><span>1,960.85</span></div><div class="c" style="left:430px;top:726px;width:131px;height:22px"><span>ジャスダック</span></div><div class="c n r" style="left:429px;top:747px;width:63px;height:22px"><span>3924.08</span></div><div class="c" style="left:497px;top:747px;width:64px;height:22px"><span>陰</span></div><div class="c" style="left:296px;top:768px;width:64px;height:22px"><span>先物夜間</span></div><div class="c" style="left:363px;top:768px;width:64px;height:22px"><span>始値</span></div><div class="c" style="left:430px;top:768px;width:64px;height:22px"><span>高値</span></div><div class="c" style="left:497px;top:768px;width:64px;height:22px"><span>安値</span></div><div class="c n r" style="left:295px;top:789px;width:63px;height:22px"><span>29150</span></div><div class="c" style="left:296px;top:810px;width:64px;height:22px"><span>ダウ終値</span></div><div class="c" style="left:363px;top:810px;width:64px;height:22px"><span>始値</span></div><div class="c" style="left:430px;top:810px;width:64px;height:22px"><span>高値</span></div><div class="c" style="left:497px;top:810px;width:64px;height:22px"><span>安値</span></div><div class="c n r" style="left:295px;top:831px;width:63px;height:22px"><span>34,630.00</span></div><div class="c" style="left:296px;top:852px;width:64px;height:23px"><span>為替終値</span></div><div class="c" style="left:363px;top:852px;width:64px;height:23px"><span>始値</span></div><div class="c" style="left:430px;top:852px;width:64px;height:23px"><span>高値</span></div><div class="c" style="left:497px;top:852px;width:64px;height:23px"><span>安値</span></div><div class="c n t r" style="left:295px;top:874px;width:63px;height:23px"><span>108.78</span></div><div class="c n t r" style="left:362px;top:874px;width:63px;height:23px"><span>108.79</span></div><div class="c n t r" style="left:429px;top:874px;width:63px;height:23px"><span>108.9</span></div><div class="c n t r" style="left:496px;top:874px;width:63px;height:23px"><span>108.69</span></div><div class="c" style="left:296px;top:917px;width:64px;height:22px"><span>前日比</span></div><div class="c n" style="left:363px;top:917px;width:64px;height:22px"><span>-15</span></div><div class="c" style="left:430px;top:917px;width:64px;height:22px"><span>前日比</span></div><div class="c n" style="left:497px;top:917px;width:64px;height:22px"><span>-20</span></div><div class="c" style="left:296px;top:938px;width:64px;height:22px"><span>買い</span></div><div class="c" style="left:430px;top:938px;width:64px;height:22px"><span>売り</span></div><div class="c n" style="left:296px;top:959px;width:64px;height:22px"><span>385</span></div><div class="c n" style="left:363px;top:959px;width:64px;height:22px"><span>-10</span></div><div class="c n" style="left:430px;top:959px;width:64px;height:22px"><span>868</span></div><div class="c n" style="left:497px;top:959px;width:64px;height:22px"><span>2</span></div><div class="c m" style="left:561px;top:279px;width:268px;height:23px">6月4日</div><div class="c n r" style="left:563px;top:301px;width:63px;height:23px"><span>100%</span></div><div class="c n r" style="left:630px;top:301px;width:63px;height:23px"><span>28924.04</span></div><div class="c n r" style="left:563px;top:323px;width:63px;height:23px"><span>100%</span></div><div class="c n r" style="left:630px;top:323px;width:63px;height:23px"><span>29,019.24</span></div><div class="c" style="left:564px;top:345px;width:64px;height:22px"><span>夜間/日経</span></div><div class="c" style="left:631px;top:345px;width:64px;height:22px"><span>ダウ前日比</span></div><div class="c" style="left:698px;top:345px;width:64px;height:22px"><span>円高</span></div><div class="c" style="left:765px;top:345px;width:64px;height:22px"><span>TOP前日比</span></div><div class="c n r" style="left:563px;top:366px;width:63px;height:22px"><span>198.48</span></div><div class="c n r" style="left:630px;top:366px;width:63px;height:22px"><span>179</span></div><div class="c n r" style="left:697px;top:366px;width:63px;height:22px"><span>0</span></div><div class="c n r" style="left:764px;top:366px;width:63px;height:22px"><span>0.49</span></div><div class="c" style="left:564px;top:387px;width:64px;height:22px"><span>日経陽陰</span></div><div class="c" style="left:631px;top:387px;width:64px;height:22px"><span>空売比率</span></div><div class="c" style="left:698px;top:387px;width:64px;height:22px"><span>マザ陽陰</span></div><div class="c" style="left:765px;top:387px;width:64px;height:22px"><span>top陽陰</span></div><div class="c" style="left:564px;top:408px;width:64px;height:22px"><span>陽</span></div><div class="c n r" style="left:630px;top:408px;width:63px;height:22px"><span>42%</span></div><div class="c" style="left:698px;top:408px;width:64px;height:22px"><span>陰</span></div><div class="c" style="left:765px;top:408px;width:64px;height:22px"><span>陽</span></div><div class="c" style="left:564px;top:429px;width:64px;height:23px"><span>前日比</span></div><div class="c" style="left:631px;top:429px;width:64px;height:23px"><span>値上下比</span></div><div class="c" style="left:698px;top:429px;width:64px;height:23px"><span>値上</span></div><div class="c" style="left:765px;top:429px;width:64px;height:23px"><span>値下</span></div><div class="c n r" style="left:563px;top:451px;width:63px;height:23px"><span>-116.59</span></div><div class="c n r" style="left:630px;top:451px;width:63px;height:23px"><span>47%</span></div><div class="c n r" style="left:697px;top:451px;width:63px;height:23px"><span>2024</span></div><div class="c n r" style="left:764px;top:451px;width:63px;height:23px"><span>2275</span></div><div class="c" style="left:631px;top:473px;width:64px;height:22px"><span>東一前日比</span></div><div class="c" style="left:698px;top:473px;width:64px;height:22px"><span>値上</span></div><div class="c" style="left:765px;top:473px;width:64px;height:22px"><span>値下</span></div><div class="c n" style="left:631px;top:494px;width:64px;height:22px"><span>49%</span></div><div class="c n" style="left:698px;top:494px;width:64px;height:22px"><span>1117</span></div><div class="c n" style="left:765px;top:494px;width:64px;height:22px"><span>1142</span></div><div class="c" style="left:631px;top:515px;width:64px;height:22px"><span>東二前日比</span></div><div class="c" style="left:698px;top:515px;width:64px;height:22px"><span>値上</span></div><div class="c" style="left:765px;top:515px;width:64px;height:22px"><span>値下</span></div><div class="c n" style="left:631px;top:536px;width:64px;height:22px"><span>52%</span></div><div class="c n" style="left:698px;top:536px;width:64px;height:22px"><span>249</span></div><div class="c n" style="left:765px;top:536px;width:64px;height:22px"><span>228</span></div><div class="c" style="left:564px;top:557px;width:64px;height:22px"><span>JQ前日比</span></div><div class="c" style="left:631px;top:557px;width:64px;height:22px"><span>jq前日比</span></div><div class="c" style="left:698px;top:557px;width:64px;height:22px"><span>値上</span></div><div class="c" style="left:765px;top:557px;width:64px;height:22px"><span>値下</span></div><div class="c n" style="left:564px;top:578px;width:64px;height:22px"><span>-0.18</span></div><div class="c n" style="left:631px;top:578px;width:64px;height:22px"><span>48%</span></div><div class="c n" style="left:698px;top:578px;width:64px;height:22px"><span>353</span></div><div class="c n" style="left:765px;top:578px;width:64px;height:22px"><span>378</span></div><div class="c" style="left:564px;top:599px;width:64px;height:22px"><span>マザ前日比</span></div><div class="c" style="left:631px;top:599px;width:64px;height:22px"><span>値上下比</span></div><div class="c" style="left:698px;top:599px;width:64px;height:22px"><span>値上</span></div><div class="c" style="left:765px;top:599px;width:64px;height:22px"><span>値下</span></div><div class="c n" style="left:564px;top:620px;width:64px;height:22px"><span>-21.72</span></div><div class="c n" style="left:631px;top:620px;width:64px;height:22px"><span>30%</span></div><div class="c n" style="left:698px;top:620px;width:64px;height:22px"><span>106</span></div><div class="c n" style="left:765px;top:620px;width:64px;height:22px"><span>249</span></div><div class="c" style="left:564px;top:641px;width:64px;height:22px"><span>終値</span></div><div class="c" style="left:631px;top:641px;width:64px;height:22px"><span>始値</span></div><div class="c" style="left:698px;top:641px;width:64px;height:22px"><span>高値</span></div><div class="c" style="left:765px;top:641px;width:64px;height:22px"><span>安値</span></div><div class="c n r" style="left:563px;top:662px;width:63px;height:23px"><span>28,941.52</span></div><div class="c n r" style="left:630px;top:662px;width:63px;height:23px"><span>28,901.42</span></div><div class="c n r" style="left:697px;top:662px;width:63px;height:23px"><span>28,991.24</span></div><div class="c n r" style="left:764px;top:662px;width:63px;height:23px"><span>28,764.68</span></div><div class="c" style="left:564px;top:684px;width:64px;height:22px"><span>マザ終値</span></div><div class="c" style="left:631px;top:684px;width:64px;height:22px"><span>始値</span></div><div class="c" style="left:698px;top:684px;width:64px;height:22px"><span>TOP終値</span></div><div class="c" style="left:765px;top:684px;width:64px;height:22px"><span>始値</span></div><div class="c n r" style="left:563px;top:705px;width:63px;height:22px"><span>1,119.73</span></div><div class="c n r" style="left:697px;top:705px;width:63px;height:22px"><span>1,959.19</span></div><div class="c" style="left:698px;top:726px;width:131px;height:22px"><span>ジャスダック</span></div><div class="c n r" style="left:697px;top:747px;width:63px;height:22px"><span>3911.33</span></div><div class="c" style="left:765px;top:747px;width:64px;height:22px"><span>陽</span></div><div class="c" style="left:564px;top:768px;width:64px;height:22px"><span>先物夜間</span></div><div class="c" style="left:631px;top:768px;width:64px;height:22px"><span>始値</span></div><div class="c" style="left:698px;top:768px;width:64px;height:22px"><span>高値</span></div><div class="c" style="left:765px;top:768px;width:64px;height:22px"><span>安値</span></div><div class="c n r" style="left:563px;top:789px;width:63px;height:22px"><span>29140</span></div><div class="c" style="left:564px;top:810px;width:64px;height:22px"><span>ダウ終値</span></div><div class="c" style="left:631px;top:810px;width:64px;height:22px"><span>始値</span></div><div class="c" style="left:698px;top:810px;width:64px;height:22px"><span>高値</span></div><div class="c" style="left:765px;top:810px;width:64px;height:22px"><span>安値</span></div><div class="c n r" style="left:563px;top:831px;width:63px;height:22px"><span>34,756.00</span></div><div class="c" style="left:564px;top:852px;width:64px;height:23px"><span>為替終値</span></div><div class="c" style="left:631px;top:852px;width:64px;height:23px"><span>始値</span></div><div class="c" style="left:698px;top:852px;width:64px;height:23px"><span>高値</span></div><div class="c" style="left:765px;top:852px;width:64px;height:23px"><span>安値</span></div><div class="c n t r" style="left:563px;top:874px;width:63px;height:23px"><span>108.78</span></div><div class="c n t r" style="left:630px;top:874px;width:63px;height:23px"><span>108.79</span></div><div class="c n t r" style="left:697px;top:874px;width:63px;height:23px"><span>108.9</span></div><div class="c n t r" style="left:764px;top:874px;width:63px;height:23px"><span>108.69</span></div><div class="c" style="left:564px;top:917px;width:64px;height:22px"><span>前日比</span></div><div class="c n" style="left:631px;top:917px;width:64px;height:22px"><span>15</span></div><div class="c" style="left:698px;top:917px;width:64px;height:22px"><span>前日比</span></div><div class="c n" style="left:765px;top:917px;width:64px;height:22px"><span>8</span></div><div class="c" style="left:564px;top:938px;width:64px;height:22px"><span>買い</span></div><div class="c" style="left:698px;top:938px;width:64px;height:22px"><span>売り</span></div><div class="c n" style="left:564px;top:959px;width:64px;height:22px"><span>395</span></div><div class="c n" style="left:631px;top:959px;width:64px;height:22px"><span>5</span></div><div class="c n" style="left:698px;top:959px;width:64px;height:22px"><span>866</span></div><div class="c n" style="left:765px;top:959px;width:64px;height:22px"><span>22</span></div><div class="c m" style="left:829px;top:279px;width:268px;height:23px">6月3日</div><div class="c n r" style="left:831px;top:301px;width:63px;height:23px"><span>100%</span></div><div class="c n r" style="left:898px;top:301px;width:63px;height:23px"><span>28965.62</span></div><div class="c n r" style="left:831px;top:323px;width:63px;height:23px"><span>100%</span></div><div class="c n r" style="left:898px;top:323px;width:63px;height:23px"><span>28,941.52</span></div><div class="c" style="left:832px;top:345px;width:64px;height:22px"><span>夜間/日経</span></div><div class="c" style="left:899px;top:345px;width:64px;height:22px"><span>ダウ前日比</span></div><div class="c" style="left:966px;top:345px;width:64px;height:22px"><span>円高</span></div><div class="c" style="left:1033px;top:345px;width:64px;height:22px"><span>TOP前日比</span></div><div class="c n r" style="left:831px;top:366px;width:63px;height:22px"><span>-78.11</span></div><div class="c n r" style="left:898px;top:366px;width:63px;height:22px"><span>-23</span></div><div class="c n r" style="left:965px;top:366px;width:63px;height:22px"><span>0</span></div><div class="c n r" style="left:1032px;top:366px;width:63px;height:22px"><span>16.37</span></div><div class="c" style="left:832px;top:387px;width:64px;height:22px"><span>日経陽陰</span></div><div class="c" style="left:899px;top:387px;width:64px;height:22px"><span>空売比率</span></div><div class="c" style="left:966px;top:387px;width:64px;height:22px"><span>マザ陽陰</span></div><div class="c" style="left:1033px;top:387px;width:64px;height:22px"><span>top陽陰</span></div><div class="c" style="left:832px;top:408px;width:64px;height:22px"><span>陽</span></div><div class="c n r" style="left:898px;top:408px;width:63px;height:22px"><span>39%</span></div><div class="c" style="left:966px;top:408px;width:64px;height:22px"><span>陽</span></div><div class="c" style="left:1033px;top:408px;width:64px;height:22px"><span>陽</span></div><div class="c" style="left:832px;top:429px;width:64px;height:23px"><span>前日比</span></div><div class="c" style="left:899px;top:429px;width:64px;height:23px"><span>値上下比</span></div><div class="c" style="left:966px;top:429px;width:64px;height:23px"><span>値上</span></div><div class="c" style="left:1033px;top:429px;width:64px;height:23px"><span>値下</span></div><div class="c n r" style="left:831px;top:451px;width:63px;height:23px"><span>111.97</span></div><div class="c n r" style="left:898px;top:451px;width:63px;height:23px"><span>64%</span></div><div class="c n r" style="left:965px;top:451px;width:63px;height:23px"><span>2762</span></div><div class="c n r" style="left:1032px;top:451px;width:63px;height:23px"><span>1559</span></div><div class="c" style="left:899px;top:473px;width:64px;height:22px"><span>東一前日比</span></div><div class="c" style="left:966px;top:473px;width:64px;height:22px"><span>値上</span></div><div class="c" style="left:1033px;top:473px;width:64px;height:22px"><span>値下</span></div><div class="c n" style="left:899px;top:494px;width:64px;height:22px"><span>70%</span></div><div class="c n" style="left:966px;top:494px;width:64px;height:22px"><span>1576</span></div><div class="c n" style="left:1033px;top:494px;width:64px;height:22px"><span>681</span></div><div class="c" style="left:899px;top:515px;width:64px;height:22px"><span>東二前日比</span></div><div class="c" style="left:966px;top:515px;width:64px;height:22px"><span>値上</span></div><div class="c" style="left:1033px;top:515px;width:64px;height:22px"><span>値下</span></div><div class="c n" style="left:899px;top:536px;width:64px;height:22px"><span>55%</span></div><div class="c n" style="left:966px;top:536px;width:64px;height:22px"><span>264</span></div><div class="c n" style="left:1033px;top:536px;width:64px;height:22px"><span>217</span></div><div class="c" style="left:832px;top:557px;width:64px;height:22px"><span>JQ前日比</span></div><div class="c" style="left:899px;top:557px;width:64px;height:22px"><span>jq前日比</span></div><div class="c" style="left:966px;top:557px;width:64px;height:22px"><span>値上</span></div><div class="c" style="left:1033px;top:557px;width:64px;height:22px"><span>値下</span></div><div class="c n" style="left:832px;top:578px;width:64px;height:22px"><span>13.74</span></div><div class="c n" style="left:899px;top:578px;width:64px;height:22px"><span>55%</span></div><div class="c n" style="left:966px;top:578px;width:64px;height:22px"><span>408</span></div><div class="c n" style="left:1033px;top:578px;width:64px;height:22px"><span>331</span></div><div class="c" style="left:832px;top:599px;width:64px;height:22px"><span>マザ前日比</span></div><div class="c" style="left:899px;top:599px;width:64px;height:22px"><span>値上下比</span></div><div class="c" style="left:966px;top:599px;width:64px;height:22px"><span>値上</span></div><div class="c" style="left:1033px;top:599px;width:64px;height:22px"><span>値下</span></div><div class="c n" style="left:832px;top:620px;width:64px;height:22px"><span>5.65</span></div><div class="c n" style="left:899px;top:620px;width:64px;height:22px"><span>51%</span></div><div class="c n" style="left:966px;top:620px;width:64px;height:22px"><span>183</span></div><div class="c n" style="left:1033px;top:620px;width:64px;height:22px"><span>178</span></div><div class="c" style="left:832px;top:641px;width:64px;height:22px"><span>終値</span></div><div class="c" style="left:899px;top:641px;width:64px;height:22px"><span>始値</span></div><div class="c" style="left:966px;top:641px;width:64px;height:22px"><span>高値</span></div><div class="c" style="left:1033px;top:641px;width:64px;height:22px"><span>安値</span></div><div class="c n r" style="left:831px;top:662px;width:63px;height:23px"><span>29,058.11</span></div><div class="c n r" style="left:898px;top:662px;width:63px;height:23px"><span>28,890.39</span></div><div class="c n r" style="left:965px;top:662px;width:63px;height:23px"><span>29,157.16</span></div><div class="c n r" style="left:1032px;top:662px;width:63px;height:23px"><span>28,879.15</span></div><div class="c" style="left:832px;top:684px;width:64px;height:22px"><span>マザ終値</span></div><div class="c" style="left:899px;top:684px;width:64px;height:22px"><span>始値</span></div><div class="c" style="left:966px;top:684px;width:64px;height:22px"><span>TOP終値</span></div><div class="c" style="left:1033px;top:684px;width:64px;height:22px"><span>始値</span></div><div class="c n r" style="left:831px;top:705px;width:63px;height:22px"><span>1,141.45</span></div><div class="c n r" style="left:965px;top:705px;width:63px;height:22px"><span>1,958.70</span></div><div class="c" style="left:966px;top:726px;width:131px;height:22px"><span>ジャスダック</span></div><div class="c n r" style="left:965px;top:747px;width:63px;height:22px"><span>3911.51</span></div><div class="c" style="left:1033px;top:747px;width:64px;height:22px"><span>陽</span></div><div class="c" style="left:832px;top:768px;width:64px;height:22px"><span>先物夜間</span></div><div class="c" style="left:899px;top:768px;width:64px;height:22px"><span>始値</span></div><div class="c" style="left:966px;top:768px;width:64px;height:22px"><span>高値</span></div><div class="c" style="left:1033px;top:768px;width:64px;height:22px"><span>安値</span></div><div class="c n r" style="left:831px;top:789px;width:63px;height:22px"><span>28980</span></div><div class="c" style="left:832px;top:810px;width:64px;height:22px"><span>ダウ終値</span></div><div class="c" style="left:899px;top:810px;width:64px;height:22px"><span>始値</span></div><div class="c" style="left:966px;top:810px;width:64px;height:22px"><span>高値</span></div><div class="c" style="left:1033px;top:810px;width:64px;height:22px"><span>安値</span></div><div class="c n r" style="left:831px;top:831px;width:63px;height:22px"><span>34,577.00</span></div><div class="c" style="left:832px;top:852px;width:64px;height:23px"><span>為替終値</span></div><div class="c" style="left:899px;top:852px;width:64px;height:23px"><span>始値</span></div><div class="c" style="left:966px;top:852px;width:64px;height:23px"><span>高値</span></div><div class="c" style="left:1033px;top:852px;width:64px;height:23px"><span>安値</span></div><div class="c n t r" style="left:831px;top:874px;width:63px;height:23px"><span>108.78</span></div><div class="c n t r" style="left:898px;top:874px;width:63px;height:23px"><span>108.79</span></div><div class="c n t r" style="left:965px;top:874px;width:63px;height:23px"><span>108.9</span></div><div class="c n t r" style="left:1032px;top:874px;width:63px;height:23px"><span>108.69</span></div><div class="c" style="left:832px;top:917px;width:64px;height:22px"><span>前日比</span></div><div class="c n" style="left:899px;top:917px;width:64px;height:22px"><span>-7</span></div><div class="c" style="left:966px;top:917px;width:64px;height:22px"><span>前日比</span></div><div class="c n" style="left:1033px;top:917px;width:64px;height:22px"><span>-16</span></div><div class="c" style="left:832px;top:938px;width:64px;height:22px"><span>買い</span></div><div class="c" style="left:966px;top:938px;width:64px;height:22px"><span>売り</span></div><div class="c n" style="left:832px;top:959px;width:64px;height:22px"><span>390</span></div><div class="c n" style="left:899px;top:959px;width:64px;height:22px"><span>-10</span></div><div class="c n" style="left:966px;top:959px;width:64px;height:22px"><span>844</span></div><div class="c n" style="left:1033px;top:959px;width:64px;height:22px"><span>14</span></div><div class="c m" style="left:1097px;top:279px;width:268px;height:23px">6月2日</div><div class="c n r" style="left:1099px;top:301px;width:63px;height:23px"><span>100%</span></div><div class="c n r" style="left:1166px;top:301px;width:63px;height:23px"><span>28863.8</span></div><div class="c n r" style="left:1099px;top:323px;width:63px;height:23px"><span>101%</span></div><div class="c n r" style="left:1166px;top:323px;width:63px;height:23px"><span>29,058.11</span></div><div class="c" style="left:1100px;top:345px;width:64px;height:22px"><span>夜間/日経</span></div><div class="c" style="left:1167px;top:345px;width:64px;height:22px"><span>ダウ前日比</span></div><div class="c" style="left:1234px;top:345px;width:64px;height:22px"><span>円高</span></div><div class="c" style="left:1301px;top:345px;width:64px;height:22px"><span>TOP前日比</span></div><div class="c n r" style="left:1099px;top:366px;width:63px;height:22px"><span>-86.14</span></div><div class="c n r" style="left:1166px;top:366px;width:63px;height:22px"><span>25</span></div><div class="c n r" style="left:1233px;top:366px;width:63px;height:22px"><span>0</span></div><div class="c n r" style="left:1300px;top:366px;width:63px;height:22px"><span>16.15</span></div><div class="c" style="left:1100px;top:387px;width:64px;height:22px"><span>日経陽陰</span></div><div class="c" style="left:1167px;top:387px;width:64px;height:22px"><span>空売比率</span></div><div class="c" style="left:1234px;top:387px;width:64px;height:22px"><span>マザ陽陰</span></div><div class="c" style="left:1301px;top:387px;width:64px;height:22px"><span>top陽陰</span></div><div class="c" style="left:1100px;top:408px;width:64px;height:22px"><span>陽</span></div><div class="c n r" style="left:1166px;top:408px;width:63px;height:22px"><span>40%</span></div><div class="c" style="left:1234px;top:408px;width:64px;height:22px"><span>陰</span></div><div class="c" style="left:1301px;top:408px;width:64px;height:22px"><span>陽</span></div><div class="c" style="left:1100px;top:429px;width:64px;height:23px"><span>前日比</span></div><div class="c" style="left:1167px;top:429px;width:64px;height:23px"><span>値上下比</span></div><div class="c" style="left:1234px;top:429px;width:64px;height:23px"><span>値上</span></div><div class="c" style="left:1301px;top:429px;width:64px;height:23px"><span>値下</span></div><div class="c n r" style="left:1099px;top:451px;width:63px;height:23px"><span>131.8</span></div><div class="c n r" style="left:1166px;top:451px;width:63px;height:23px"><span>57%</span></div><div class="c n r" style="left:1233px;top:451px;width:63px;height:23px"><span>2484</span></div><div class="c n r" style="left:1300px;top:451px;width:63px;height:23px"><span>1844</span></div><div class="c" style="left:1167px;top:473px;width:64px;height:22px"><span>東一前日比</span></div><div class="c" style="left:1234px;top:473px;width:64px;height:22px"><span>値上</span></div><div class="c" style="left:1301px;top:473px;width:64px;height:22px"><span>値下</span></div><div class="c n" style="left:1167px;top:494px;width:64px;height:22px"><span>59%</span></div><div class="c n" style="left:1234px;top:494px;width:64px;height:22px"><span>1338</span></div><div class="c n" style="left:1301px;top:494px;width:64px;height:22px"><span>931</span></div><div class="c" style="left:1167px;top:515px;width:64px;height:22px"><span>東二前日比</span></div><div class="c" style="left:1234px;top:515px;width:64px;height:22px"><span>値上</span></div><div class="c" style="left:1301px;top:515px;width:64px;height:22px"><span>値下</span></div><div class="c n" style="left:1167px;top:536px;width:64px;height:22px"><span>55%</span></div><div class="c n" style="left:1234px;top:536px;width:64px;height:22px"><span>262</span></div><div class="c n" style="left:1301px;top:536px;width:64px;height:22px"><span>216</span></div><div class="c" style="left:1100px;top:557px;width:64px;height:22px"><span>JQ前日比</span></div><div class="c" style="left:1167px;top:557px;width:64px;height:22px"><span>jq前日比</span></div><div class="c" style="left:1234px;top:557px;width:64px;height:22px"><span>値上</span></div><div class="c" style="left:1301px;top:557px;width:64px;height:22px"><span>値下</span></div><div class="c n" style="left:1100px;top:578px;width:64px;height:22px"><span>1.01</span></div><div class="c n" style="left:1167px;top:578px;width:64px;height:22px"><span>53%</span></div><div class="c n" style="left:1234px;top:578px;width:64px;height:22px"><span>390</span></div><div class="c n" style="left:1301px;top:578px;width:64px;height:22px"><span>350</span></div><div class="c" style="left:1100px;top:599px;width:64px;height:22px"><span>マザ前日比</span></div><div class="c" style="left:1167px;top:599px;width:64px;height:22px"><span>値上下比</span></div><div class="c" style="left:1234px;top:599px;width:64px;height:22px"><span>値上</span></div><div class="c" style="left:1301px;top:599px;width:64px;height:22px"><span>値下</span></div><div class="c n" style="left:1100px;top:620px;width:64px;height:22px"><span>-5.94</span></div><div class="c n" style="left:1167px;top:620px;width:64px;height:22px"><span>46%</span></div><div class="c n" style="left:1234px;top:620px;width:64px;height:22px"><span>166</span></div><div class="c n" style="left:1301px;top:620px;width:64px;height:22px"><span>193</span></div><div class="c" style="left:1100px;top:641px;width:64px;height:22px"><span>終値</span></div><div class="c" style="left:1167px;top:641px;width:64px;height:22px"><span>始値</span></div><div class="c" style="left:1234px;top:641px;width:64px;height:22px"><span>高値</span></div><div class="c" style="left:1301px;top:641px;width:64px;height:22px"><span>安値</span></div><div class="c n r" style="left:1099px;top:662px;width:63px;height:23px"><span>28,946.14</span></div><div class="c n r" style="left:1166px;top:662px;width:63px;height:23px"><span>28,730.81</span></div><div class="c n r" style="left:1233px;top:662px;width:63px;height:23px"><span>29,003.55</span></div><div class="c n r" style="left:1300px;top:662px;width:63px;height:23px"><span>28,565.83</span></div><div class="c" style="left:1100px;top:684px;width:64px;height:22px"><span>マザ終値</span></div><div class="c" style="left:1167px;top:684px;width:64px;height:22px"><span>始値</span></div><div class="c" style="left:1234px;top:684px;width:64px;height:22px"><span>TOP終値</span></div><div class="c" style="left:1301px;top:684px;width:64px;height:22px"><span>始値</span></div><div class="c n r" style="left:1099px;top:705px;width:63px;height:22px"><span>1,135.80</span></div><div class="c n r" style="left:1233px;top:705px;width:63px;height:22px"><span>1,942.33</span></div><div class="c" style="left:1234px;top:726px;width:131px;height:22px"><span>ジャスダック</span></div><div class="c n r" style="left:1233px;top:747px;width:63px;height:22px"><span>3897.77</span></div><div class="c" style="left:1301px;top:747px;width:64px;height:22px"><span>陰</span></div><div class="c" style="left:1100px;top:768px;width:64px;height:22px"><span>先物夜間</span></div><div class="c" style="left:1167px;top:768px;width:64px;height:22px"><span>始値</span></div><div class="c" style="left:1234px;top:768px;width:64px;height:22px"><span>高値</span></div><div class="c" style="left:1301px;top:768px;width:64px;height:22px"><span>安値</span></div><div class="c n r" style="left:1099px;top:789px;width:63px;height:22px"><span>28860</span></div><div class="c" style="left:1100px;top:810px;width:64px;height:22px"><span>ダウ終値</span></div><div class="c" style="left:1167px;top:810px;width:64px;height:22px"><span>始値</span></div><div class="c" style="left:1234px;top:810px;width:64px;height:22px"><span>高値</span></div><div class="c" style="left:1301px;top:810px;width:64px;height:22px"><span>安値</span></div><div class="c n r" style="left:1099px;top:831px;width:63px;height:22px"><span>34,600.00</span></div><div class="c" style="left:1100px;top:852px;width:64px;height:23px"><span>為替終値</span></div><div class="c" style="left:1167px;top:852px;width:64px;height:23px"><span>始値</span></div><div class="c" style="left:1234px;top:852px;width:64px;height:23px"><span>高値</span></div><div class="c" style="left:1301px;top:852px;width:64px;height:23px"><span>安値</span></div><div class="c n t r" style="left:1099px;top:874px;width:63px;height:23px"><span>108.78</span></div><div class="c n t r" style="left:1166px;top:874px;width:63px;height:23px"><span>108.79</span></div><div class="c n t r" style="left:1233px;top:874px;width:63px;height:23px"><span>108.9</span></div><div class="c n t r" style="left:1300px;top:874px;width:63px;height:23px"><span>108.69</span></div><div class="c" style="left:1100px;top:917px;width:64px;height:22px"><span>前日比</span></div><div class="c n" style="left:1167px;top:917px;width:64px;height:22px"><span>-2</span></div><div class="c" style="left:1234px;top:917px;width:64px;height:22px"><span>前日比</span></div><div class="c n" style="left:1301px;top:917px;width:64px;height:22px"><span>-6</span></div><div class="c" style="left:1100px;top:938px;width:64px;height:22px"><span>買い</span></div><div class="c" style="left:1234px;top:938px;width:64px;height:22px"><span>売り</span></div><div class="c n" style="left:1100px;top:959px;width:64px;height:22px"><span>400</span></div><div class="c n" style="left:1167px;top:959px;width:64px;height:22px"><span>-3</span></div><div class="c n" style="left:1234px;top:959px;width:64px;height:22px"><span>830</span></div><div class="c n" style="left:1301px;top:959px;width:64px;height:22px"><span>30</span></div><div class="c m" style="left:1365px;top:279px;width:268px;height:23px">6月1日</div><div class="c n r" style="left:1367px;top:301px;width:63px;height:23px"><span>100%</span></div><div class="c n r" style="left:1434px;top:301px;width:63px;height:23px"><span>28803.01</span></div><div class="c n r" style="left:1367px;top:323px;width:63px;height:23px"><span>100%</span></div><div class="c n r" style="left:1434px;top:323px;width:63px;height:23px"><span>28,946.14</span></div><div class="c" style="left:1368px;top:345px;width:64px;height:22px"><span>夜間/日経</span></div><div class="c" style="left:1435px;top:345px;width:64px;height:22px"><span>ダウ前日比</span></div><div class="c" style="left:1502px;top:345px;width:64px;height:22px"><span>円高</span></div><div class="c" style="left:1569px;top:345px;width:64px;height:22px"><span>TOP前日比</span></div><div class="c n r" style="left:1367px;top:366px;width:63px;height:22px"><span>-54.34</span></div><div class="c n r" style="left:1434px;top:366px;width:63px;height:22px"><span>46</span></div><div class="c n r" style="left:1501px;top:366px;width:63px;height:22px"><span>0</span></div><div class="c n r" style="left:1568px;top:366px;width:63px;height:22px"><span>3.2</span></div><div class="c" style="left:1368px;top:387px;width:64px;height:22px"><span>日経陽陰</span></div><div class="c" style="left:1435px;top:387px;width:64px;height:22px"><span>空売比率</span></div><div class="c" style="left:1502px;top:387px;width:64px;height:22px"><span>マザ陽陰</span></div><div class="c" style="left:1569px;top:387px;width:64px;height:22px"><span>top陽陰</span></div><div class="c" style="left:1368px;top:408px;width:64px;height:22px"><span>陰</span></div><div class="c n r" style="left:1434px;top:408px;width:63px;height:22px"><span>41%</span></div><div class="c" style="left:1502px;top:408px;width:64px;height:22px"><span>陰</span></div><div class="c" style="left:1569px;top:408px;width:64px;height:22px"><span>陰</span></div><div class="c" style="left:1368px;top:429px;width:64px;height:23px"><span>前日比</span></div><div class="c" style="left:1435px;top:429px;width:64px;height:23px"><span>値上下比</span></div><div class="c" style="left:1502px;top:429px;width:64px;height:23px"><span>値上</span></div><div class="c" style="left:1569px;top:429px;width:64px;height:23px"><span>値下</span></div><div class="c n r" style="left:1367px;top:451px;width:63px;height:23px"><span>-45.74</span></div><div class="c n r" style="left:1434px;top:451px;width:63px;height:23px"><span>57%</span></div><div class="c n r" style="left:1501px;top:451px;width:63px;height:23px"><span>2443</span></div><div class="c n r" style="left:1568px;top:451px;width:63px;height:23px"><span>1853</span></div><div class="c" style="left:1435px;top:473px;width:64px;height:22px"><span>東一前日比</span></div><div class="c" style="left:1502px;top:473px;width:64px;height:22px"><span>値上</span></div><div class="c" style="left:1569px;top:473px;width:64px;height:22px"><span>値下</span></div><div class="c n" style="left:1435px;top:494px;width:64px;height:22px"><span>64%</span></div><div class="c n" style="left:1502px;top:494px;width:64px;height:22px"><span>1440</span></div><div class="c n" style="left:1569px;top:494px;width:64px;height:22px"><span>822</span></div><div class="c" style="left:1435px;top:515px;width:64px;height:22px"><span>東二前日比</span></div><div class="c" style="left:1502px;top:515px;width:64px;height:22px"><span>値上</span></div><div class="c" style="left:1569px;top:515px;width:64px;height:22px"><span>値下</span></div><div class="c n" style="left:1435px;top:536px;width:64px;height:22px"><span>53%</span></div><div class="c n" style="left:1502px;top:536px;width:64px;height:22px"><span>252</span></div><div class="c n" style="left:1569px;top:536px;width:64px;height:22px"><span>224</span></div><div class="c" style="left:1368px;top:557px;width:64px;height:22px"><span>JQ前日比</span></div><div class="c" style="left:1435px;top:557px;width:64px;height:22px"><span>jq前日比</span></div><div class="c" style="left:1502px;top:557px;width:64px;height:22px"><span>値上</span></div><div class="c" style="left:1569px;top:557px;width:64px;height:22px"><span>値下</span></div><div class="c n" style="left:1368px;top:578px;width:64px;height:22px"><span>5.99</span></div><div class="c n" style="left:1435px;top:578px;width:64px;height:22px"><span>55%</span></div><div class="c n" style="left:1502px;top:578px;width:64px;height:22px"><span>389</span></div><div class="c n" style="left:1569px;top:578px;width:64px;height:22px"><span>322</span></div><div class="c" style="left:1368px;top:599px;width:64px;height:22px"><span>マザ前日比</span></div><div class="c" style="left:1435px;top:599px;width:64px;height:22px"><span>値上下比</span></div><div class="c" style="left:1502px;top:599px;width:64px;height:22px"><span>値上</span></div><div class="c" style="left:1569px;top:599px;width:64px;height:22px"><span>値下</span></div><div class="c n" style="left:1368px;top:620px;width:64px;height:22px"><span>-8.32</span></div><div class="c n" style="left:1435px;top:620px;width:64px;height:22px"><span>39%</span></div><div class="c n" style="left:1502px;top:620px;width:64px;height:22px"><span>141</span></div><div class="c n" style="left:1569px;top:620px;width:64px;height:22px"><span>216</span></div><div class="c" style="left:1368px;top:641px;width:64px;height:22px"><span>終値</span></div><div class="c" style="left:1435px;top:641px;width:64px;height:22px"><span>始値</span></div><div class="c" style="left:1502px;top:641px;width:64px;height:22px"><span>高値</span></div><div class="c" style="left:1569px;top:641px;width:64px;height:22px"><span>安値</span></div><div class="c n r" style="left:1367px;top:662px;width:63px;height:23px"><span>28,814.34</span></div><div class="c n r" style="left:1434px;top:662px;width:63px;height:23px"><span>28,998.65</span></div><div class="c n r" style="left:1501px;top:662px;width:63px;height:23px"><span>29,075.47</span></div><div class="c n r" style="left:1568px;top:662px;width:63px;height:23px"><span>28,611.25</span></div><div class="c" style="left:1368px;top:684px;width:64px;height:22px"><span>マザ終値</span></div><div class="c" style="left:1435px;top:684px;width:64px;height:22px"><span>始値</span></div><div class="c" style="left:1502px;top:684px;width:64px;height:22px"><span>TOP終値</span></div><div class="c" style="left:1569px;top:684px;width:64px;height:22px"><span>始値</span></div><div class="c n r" style="left:1367px;top:705px;width:63px;height:22px"><span>1,141.74</span></div><div class="c n r" style="left:1501px;top:705px;width:63px;height:22px"><span>1,926.18</span></div><div class="c" style="left:1368px;top:726px;width:131px;height:22px"><span>新</span></div><div class="c" style="left:1502px;top:726px;width:131px;height:22px"><span>ジャスダック</span></div><div class="c n r" style="left:1501px;top:747px;width:63px;height:22px"><span>3896.76</span></div><div class="c" style="left:1569px;top:747px;width:64px;height:22px"><span>陰</span></div><div class="c" style="left:1368px;top:768px;width:64px;height:22px"><span>先物夜間</span></div><div class="c" style="left:1435px;top:768px;width:64px;height:22px"><span>始値</span></div><div class="c" style="left:1502px;top:768px;width:64px;height:22px"><span>高値</span></div><div class="c" style="left:1569px;top:768px;width:64px;height:22px"><span>安値</span></div><div class="c n r" style="left:1367px;top:789px;width:63px;height:22px"><span>28760</span></div><div class="c" style="left:1368px;top:810px;width:64px;height:22px"><span>ダウ終値</span></div><div class="c" style="left:1435px;top:810px;width:64px;height:22px"><span>始値</span></div><div class="c" style="left:1502px;top:810px;width:64px;height:22px"><span>高値</span></div><div class="c" style="left:1569px;top:810px;width:64px;height:22px"><span>安値</span></div><div class="c n r" style="left:1367px;top:831px;width:63px;height:22px"><span>34,575.00</span></div><div class="c" style="left:1368px;top:852px;width:64px;height:23px"><span>為替終値</span></div><div class="c" style="left:1435px;top:852px;width:64px;height:23px"><span>始値</span></div><div class="c" style="left:1502px;top:852px;width:64px;height:23px"><span>高値</span></div><div class="c" style="left:1569px;top:852px;width:64px;height:23px"><span>安値</span></div><div class="c n t r" style="left:1367px;top:874px;width:63px;height:23px"><span>108.78</span></div><div class="c n t r" style="left:1434px;top:874px;width:63px;height:23px"><span>108.79</span></div><div class="c n t r" style="left:1501px;top:874px;width:63px;height:23px"><span>108.9</span></div><div class="c n t r" style="left:1568px;top:874px;width:63px;height:23px"><span>108.69</span></div><div class="c" style="left:1368px;top:917px;width:64px;height:22px"><span>前日比</span></div><div class="c n" style="left:1435px;top:917px;width:64px;height:22px"><span>-23</span></div><div class="c" style="left:1502px;top:917px;width:64px;height:22px"><span>前日比</span></div><div class="c n" style="left:1569px;top:917px;width:64px;height:22px"><span>72</span></div><div class="c" style="left:1368px;top:938px;width:64px;height:22px"><span>買い</span></div><div class="c" style="left:1502px;top:938px;width:64px;height:22px"><span>売り</span></div><div class="c n" style="left:1368px;top:959px;width:64px;height:22px"><span>403</span></div><div class="c n" style="left:1435px;top:959px;width:64px;height:22px"><span>-1</span></div><div class="c n" style="left:1502px;top:959px;width:64px;height:22px"><span>800</span></div><div class="c n" style="left:1569px;top:959px;width:64px;height:22px"><span>36</span></div><div class="c m" style="left:1633px;top:279px;width:268px;height:23px">5月31日</div><div class="c n r" style="left:1635px;top:301px;width:63px;height:23px"><span>100%</span></div><div class="c n r" style="left:1702px;top:301px;width:63px;height:23px"><span>28750.93</span></div><div class="c n r" style="left:1635px;top:323px;width:63px;height:23px"><span>100%</span></div><div class="c n r" style="left:1702px;top:323px;width:63px;height:23px"><span>28,814.34</span></div><div class="c" style="left:1636px;top:345px;width:64px;height:22px"><span>夜間/日経</span></div><div class="c" style="left:1703px;top:345px;width:64px;height:22px"><span>ダウ前日比</span></div><div class="c" style="left:1770px;top:345px;width:64px;height:22px"><span>円高</span></div><div class="c" style="left:1837px;top:345px;width:64px;height:22px"><span>TOP前日比</span></div><div class="c n r" style="left:1635px;top:366px;width:63px;height:22px"><span>69.92</span></div><div class="c n r" style="left:1702px;top:366px;width:63px;height:22px"><span>0</span></div><div class="c n r" style="left:1769px;top:366px;width:63px;height:22px"><span>0</span></div><div class="c n r" style="left:1836px;top:366px;width:63px;height:22px"><span>-24.46</span></div><div class="c" style="left:1636px;top:387px;width:64px;height:22px"><span>日経陽陰</span></div><div class="c" style="left:1703px;top:387px;width:64px;height:22px"><span>空売比率</span></div><div class="c" style="left:1770px;top:387px;width:64px;height:22px"><span>マザ陽陰</span></div><div class="c" style="left:1837px;top:387px;width:64px;height:22px"><span>top陽陰</span></div><div class="c" style="left:1636px;top:408px;width:64px;height:22px"><span>陰</span></div><div class="c n r" style="left:1702px;top:408px;width:63px;height:22px"><span>44%</span></div><div class="c" style="left:1770px;top:408px;width:64px;height:22px"><span>陽</span></div><div class="c" style="left:1837px;top:408px;width:64px;height:22px"><span>陰</span></div><div class="c" style="left:1636px;top:429px;width:64px;height:23px"><span>前日比</span></div><div class="c" style="left:1703px;top:429px;width:64px;height:23px"><span>値上下比</span></div><div class="c" style="left:1770px;top:429px;width:64px;height:23px"><span>値上</span></div><div class="c" style="left:1837px;top:429px;width:64px;height:23px"><span>値下</span></div><div class="c n r" style="left:1635px;top:451px;width:63px;height:23px"><span>-289.33</span></div><div class="c n r" style="left:1702px;top:451px;width:63px;height:23px"><span>35%</span></div><div class="c n r" style="left:1769px;top:451px;width:63px;height:23px"><span>1550</span></div><div class="c n r" style="left:1836px;top:451px;width:63px;height:23px"><span>2819</span></div><div class="c" style="left:1703px;top:473px;width:64px;height:22px"><span>東一前日比</span></div><div class="c" style="left:1770px;top:473px;width:64px;height:22px"><span>値上</span></div><div class="c" style="left:1837px;top:473px;width:64px;height:22px"><span>値下</span></div><div class="c n" style="left:1703px;top:494px;width:64px;height:22px"><span>22%</span></div><div class="c n" style="left:1770px;top:494px;width:64px;height:22px"><span>501</span></div><div class="c n" style="left:1837px;top:494px;width:64px;height:22px"><span>1800</span></div><div class="c" style="left:1703px;top:515px;width:64px;height:22px"><span>東二前日比</span></div><div class="c" style="left:1770px;top:515px;width:64px;height:22px"><span>値上</span></div><div class="c" style="left:1837px;top:515px;width:64px;height:22px"><span>値下</span></div><div class="c n" style="left:1703px;top:536px;width:64px;height:22px"><span>53%</span></div><div class="c n" style="left:1770px;top:536px;width:64px;height:22px"><span>255</span></div><div class="c n" style="left:1837px;top:536px;width:64px;height:22px"><span>226</span></div><div class="c" style="left:1636px;top:557px;width:64px;height:22px"><span>JQ前日比</span></div><div class="c" style="left:1703px;top:557px;width:64px;height:22px"><span>jq前日比</span></div><div class="c" style="left:1770px;top:557px;width:64px;height:22px"><span>値上</span></div><div class="c" style="left:1837px;top:557px;width:64px;height:22px"><span>値下</span></div><div class="c n" style="left:1636px;top:578px;width:64px;height:22px"><span>8.12</span></div><div class="c n" style="left:1703px;top:578px;width:64px;height:22px"><span>56%</span></div><div class="c n" style="left:1770px;top:578px;width:64px;height:22px"><span>411</span></div><div class="c n" style="left:1837px;top:578px;width:64px;height:22px"><span>329</span></div><div class="c" style="left:1636px;top:599px;width:64px;height:22px"><span>マザ前日比</span></div><div class="c" style="left:1703px;top:599px;width:64px;height:22px"><span>値上下比</span></div><div class="c" style="left:1770px;top:599px;width:64px;height:22px"><span>値上</span></div><div class="c" style="left:1837px;top:599px;width:64px;height:22px"><span>値下</span></div><div class="c n" style="left:1636px;top:620px;width:64px;height:22px"><span>4.87</span></div><div class="c n" style="left:1703px;top:620px;width:64px;height:22px"><span>42%</span></div><div class="c n" style="left:1770px;top:620px;width:64px;height:22px"><span>151</span></div><div class="c n" style="left:1837px;top:620px;width:64px;height:22px"><span>210</span></div><div class="c" style="left:1636px;top:641px;width:64px;height:22px"><span>終値</span></div><div class="c" style="left:1703px;top:641px;width:64px;height:22px"><span>始値</span></div><div class="c" style="left:1770px;top:641px;width:64px;height:22px"><span>高値</span></div><div class="c" style="left:1837px;top:641px;width:64px;height:22px"><span>安値</span></div><div class="c n r" style="left:1635px;top:662px;width:63px;height:23px"><span>28,860.08</span></div><div class="c n r" style="left:1702px;top:662px;width:63px;height:23px"><span>29,019.45</span></div><div class="c n r" style="left:1769px;top:662px;width:63px;height:23px"><span>29,147.71</span></div><div class="c n r" style="left:1836px;top:662px;width:63px;height:23px"><span>28,791.60</span></div><div class="c" style="left:1636px;top:684px;width:64px;height:22px"><span>マザ終値</span></div><div class="c" style="left:1703px;top:684px;width:64px;height:22px"><span>始値</span></div><div class="c" style="left:1770px;top:684px;width:64px;height:22px"><span>TOP終値</span></div><div class="c" style="left:1837px;top:684px;width:64px;height:22px"><span>始値</span></div><div class="c n r" style="left:1635px;top:705px;width:63px;height:22px"><span>1,150.06</span></div><div class="c n r" style="left:1769px;top:705px;width:63px;height:22px"><span>1,922.98</span></div><div class="c" style="left:1703px;top:726px;width:64px;height:22px"><span>下降</span></div><div class="c" style="left:1770px;top:726px;width:131px;height:22px"><span>ジャスダック</span></div><div class="c" style="left:1636px;top:747px;width:64px;height:22px"><span>新</span></div><div class="c n r" style="left:1769px;top:747px;width:63px;height:22px"><span>3890.77</span></div><div class="c" style="left:1837px;top:747px;width:64px;height:22px"><span>陽</span></div><div class="c" style="left:1636px;top:768px;width:64px;height:22px"><span>先物夜間</span></div><div class="c" style="left:1703px;top:768px;width:64px;height:22px"><span>始値</span></div><div class="c" style="left:1770px;top:768px;width:64px;height:22px"><span>高値</span></div><div class="c" style="left:1837px;top:768px;width:64px;height:22px"><span>安値</span></div><div class="c n r" style="left:1635px;top:789px;width:63px;height:22px"><span>28930</span></div><div class="c" style="left:1636px;top:810px;width:64px;height:22px"><span>ダウ終値</span></div><div class="c" style="left:1703px;top:810px;width:64px;height:22px"><span>始値</span></div><div class="c" style="left:1770px;top:810px;width:64px;height:22px"><span>高値</span></div><div class="c" style="left:1837px;top:810px;width:64px;height:22px"><span>安値</span></div><div class="c n r" style="left:1635px;top:831px;width:63px;height:22px"><span>34,529.00</span></div><div class="c" style="left:1636px;top:852px;width:64px;height:23px"><span>為替終値</span></div><div class="c" style="left:1703px;top:852px;width:64px;height:23px"><span>始値</span></div><div class="c" style="left:1770px;top:852px;width:64px;height:23px"><span>高値</span></div><div class="c" style="left:1837px;top:852px;width:64px;height:23px"><span>安値</span></div><div class="c n t r" style="left:1635px;top:874px;width:63px;height:23px"><span>108.78</span></div><div class="c n t r" style="left:1702px;top:874px;width:63px;height:23px"><span>108.79</span></div><div class="c n t r" style="left:1769px;top:874px;width:63px;height:23px"><span>108.9</span></div><div class="c n t r" style="left:1836px;top:874px;width:63px;height:23px"><span>108.69</span></div><div class="c" style="left:1636px;top:917px;width:64px;height:22px"><span>前日比</span></div><div class="c n" style="left:1703px;top:917px;width:64px;height:22px"><span>46</span></div><div class="c" style="left:1770px;top:917px;width:64px;height:22px"><span>前日比</span></div><div class="c n" style="left:1837px;top:917px;width:64px;height:22px"><span>-92</span></div><div class="c" style="left:1636px;top:938px;width:64px;height:22px"><span>買い</span></div><div class="c" style="left:1770px;top:938px;width:64px;height:22px"><span>売り</span></div><div class="c n" style="left:1636px;top:959px;width:64px;height:22px"><span>404</span></div><div class="c n" style="left:1703px;top:959px;width:64px;height:22px"><span>22</span></div><div class="c n" style="left:1770px;top:959px;width:64px;height:22px"><span>764</span></div><div class="c n" style="left:1837px;top:959px;width:64px;height:22px"><span>-36</span></div><div style="position:absolute;left:25px;top:874px;width:67px;height:22px;box-sizing:border-box;border:2px solid #c8c8c8;border-right:0;border-bottom-width:2px"></div><div style="position:absolute;left:92px;top:874px;width:67px;height:22px;box-sizing:border-box;border:2px solid #c8c8c8;border-right:0;border-bottom-width:2px"></div><div style="position:absolute;left:159px;top:874px;width:67px;height:22px;box-sizing:border-box;border:2px solid #c8c8c8;border-right:0;border-bottom-width:2px"></div><div style="position:absolute;left:226px;top:874px;width:67px;height:22px;box-sizing:border-box;border:2px solid #c8c8c8;border-right:0;border-bottom-width:2px"></div><div style="position:absolute;left:293px;top:874px;width:67px;height:22px;box-sizing:border-box;border:2px solid #c8c8c8;border-right:0;border-bottom-width:2px"></div><div style="position:absolute;left:360px;top:874px;width:67px;height:22px;box-sizing:border-box;border:2px solid #c8c8c8;border-right:0;border-bottom-width:2px"></div><div style="position:absolute;left:427px;top:874px;width:67px;height:22px;box-sizing:border-box;border:2px solid #c8c8c8;border-right:0;border-bottom-width:2px"></div><div style="position:absolute;left:494px;top:874px;width:67px;height:22px;box-sizing:border-box;border:2px solid #c8c8c8;border-right:0;border-bottom-width:2px"></div><div style="position:absolute;left:561px;top:874px;width:67px;height:22px;box-sizing:border-box;border:2px solid #c8c8c8;border-right:0;border-bottom-width:2px"></div><div style="position:absolute;left:628px;top:874px;width:67px;height:22px;box-sizing:border-box;border:2px solid #c8c8c8;border-right:0;border-bottom-width:2px"></div><div style="position:absolute;left:695px;top:874px;width:67px;height:22px;box-sizing:border-box;border:2px solid #c8c8c8;border-right:0;border-bottom-width:2px"></div><div style="position:absolute;left:762px;top:874px;width:67px;height:22px;box-sizing:border-box;border:2px solid #c8c8c8;border-right:0;border-bottom-width:2px"></div><div style="position:absolute;left:829px;top:874px;width:67px;height:22px;box-sizing:border-box;border:2px solid #c8c8c8;border-right:0;border-bottom-width:2px"></div><div style="position:absolute;left:896px;top:874px;width:67px;height:22px;box-sizing:border-box;border:2px solid #c8c8c8;border-right:0;border-bottom-width:2px"></div><div style="position:absolute;left:963px;top:874px;width:67px;height:22px;box-sizing:border-box;border:2px solid #c8c8c8;border-right:0;border-bottom-width:2px"></div><div style="position:absolute;left:1030px;top:874px;width:67px;height:22px;box-sizing:border-box;border:2px solid #c8c8c8;border-right:0;border-bottom-width:2px"></div><div style="position:absolute;left:1097px;top:874px;width:67px;height:22px;box-sizing:border-box;border:2px solid #c8c8c8;border-right:0;border-bottom-width:2px"></div><div style="position:absolute;left:1164px;top:874px;width:67px;height:22px;box-sizing:border-box;border:2px solid #c8c8c8;border-right:0;border-bottom-width:2px"></div><div style="position:absolute;left:1231px;top:874px;width:67px;height:22px;box-sizing:border-box;border:2px solid #c8c8c8;border-right:0;border-bottom-width:2px"></div><div style="position:absolute;left:1298px;top:874px;width:67px;height:22px;box-sizing:border-box;border:2px solid #c8c8c8;border-right:0;border-bottom-width:2px"></div><div style="position:absolute;left:1365px;top:874px;width:67px;height:22px;box-sizing:border-box;border:2px solid #c8c8c8;border-right:0;border-bottom-width:2px"></div><div style="position:absolute;left:1432px;top:874px;width:67px;height:22px;box-sizing:border-box;border:2px solid #c8c8c8;border-right:0;border-bottom-width:2px"></div><div style="position:absolute;left:1499px;top:874px;width:67px;height:22px;box-sizing:border-box;border:2px solid #c8c8c8;border-right:0;border-bottom-width:2px"></div><div style="position:absolute;left:1566px;top:874px;width:67px;height:22px;box-sizing:border-box;border:2px solid #c8c8c8;border-right:0;border-bottom-width:2px"></div><div style="position:absolute;left:1633px;top:874px;width:67px;height:22px;box-sizing:border-box;border:2px solid #c8c8c8;border-right:0;border-bottom-width:2px"></div><div style="position:absolute;left:1700px;top:874px;width:67px;height:22px;box-sizing:border-box;border:2px solid #c8c8c8;border-right:0;border-bottom-width:2px"></div><div style="position:absolute;left:1767px;top:874px;width:67px;height:22px;box-sizing:border-box;border:2px solid #c8c8c8;border-right:0;border-bottom-width:2px"></div><div style="position:absolute;left:1834px;top:874px;width:67px;height:22px;box-sizing:border-box;border:2px solid #c8c8c8;border-right:0;border-bottom-width:2px"></div><div style="position:absolute;left:26px;top:300px;width:1869px;height:2px;background:#000"></div><div style="position:absolute;left:26px;top:322px;width:1869px;height:2px;background:#000"></div><div style="position:absolute;left:26px;top:344px;width:1869px;height:2px;background:#000"></div><div style="position:absolute;left:292px;top:279px;width:2px;height:383px;background:#000"></div><div style="position:absolute;left:292px;top:684px;width:2px;height:190px;background:#000"></div><div style="position:absolute;left:292px;top:896px;width:2px;height:84px;background:#000"></div><div style="position:absolute;left:560px;top:279px;width:2px;height:383px;background:#000"></div><div style="position:absolute;left:560px;top:684px;width:2px;height:190px;background:#000"></div><div style="position:absolute;left:560px;top:896px;width:2px;height:84px;background:#000"></div><div style="position:absolute;left:828px;top:279px;width:2px;height:383px;background:#000"></div><div style="position:absolute;left:828px;top:684px;width:2px;height:190px;background:#000"></div><div style="position:absolute;left:828px;top:896px;width:2px;height:84px;background:#000"></div><div style="position:absolute;left:1096px;top:279px;width:2px;height:383px;background:#000"></div><div style="position:absolute;left:1096px;top:684px;width:2px;height:190px;background:#000"></div><div style="position:absolute;left:1096px;top:896px;width:2px;height:84px;background:#000"></div><div style="position:absolute;left:1364px;top:279px;width:2px;height:383px;background:#000"></div><div style="position:absolute;left:1364px;top:684px;width:2px;height:190px;background:#000"></div><div style="position:absolute;left:1364px;top:896px;width:2px;height:84px;background:#000"></div><div style="position:absolute;left:1632px;top:279px;width:2px;height:383px;background:#000"></div><div style="position:absolute;left:1632px;top:684px;width:2px;height:190px;background:#000"></div><div style="position:absolute;left:1632px;top:896px;width:2px;height:84px;background:#000"></div><div style="position:absolute;left:158px;top:301px;width:2px;height:44px;background:#000"></div><div style="position:absolute;left:426px;top:301px;width:2px;height:44px;background:#000"></div><div style="position:absolute;left:694px;top:301px;width:2px;height:44px;background:#000"></div><div style="position:absolute;left:962px;top:301px;width:2px;height:44px;background:#000"></div><div style="position:absolute;left:1230px;top:301px;width:2px;height:44px;background:#000"></div><div style="position:absolute;left:1498px;top:301px;width:2px;height:44px;background:#000"></div><div style="position:absolute;left:1766px;top:301px;width:2px;height:44px;background:#000"></div><div style="position:absolute;left:225px;top:958px;width:70px;height:30px;box-sizing:border-box;border:2px solid #217346;box-shadow:inset 0 0 0 1px #fff"></div><div style="position:absolute;left:93px;top:960px;width:0;height:0;border-top:5px solid #1e7145;border-right:5px solid transparent"></div><div style="position:absolute;left:0px;top:258px;width:1895px;height:21px;background:#e6e6e6"></div><div style="position:absolute;left:0px;top:278px;width:1895px;height:2px;background:#b4b4b4"></div><div class="h" style="left:25px;top:258px;width:67px;color:#444">I</div><div style="position:absolute;left:92px;top:258px;width:1px;height:20px;background:#c6c6c6"></div><div class="h" style="left:92px;top:258px;width:67px;color:#444">J</div><div style="position:absolute;left:159px;top:258px;width:1px;height:20px;background:#c6c6c6"></div><div class="h" style="left:159px;top:258px;width:67px;color:#444">K</div><div style="position:absolute;left:226px;top:258px;width:1px;height:20px;background:#c6c6c6"></div><div style="position:absolute;left:227px;top:258px;width:67px;height:21px;background:#d2d2d2"></div><div style="position:absolute;left:227px;top:277px;width:67px;height:2px;background:#217346"></div><div class="h" style="left:226px;top:258px;width:67px;color:#217346">L</div><div style="position:absolute;left:293px;top:258px;width:1px;height:20px;background:#c6c6c6"></div><div class="h" style="left:293px;top:258px;width:67px;color:#444">M</div><div style="position:absolute;left:360px;top:258px;width:1px;height:20px;background:#c6c6c6"></div><div class="h" style="left:360px;top:258px;width:67px;color:#444">N</div><div style="position:absolute;left:427px;top:258px;width:1px;height:20px;background:#c6c6c6"></div><div class="h" style="left:427px;top:258px;width:67px;color:#444">O</div><div style="position:absolute;left:494px;top:258px;width:1px;height:20px;background:#c6c6c6"></div><div class="h" style="left:494px;top:258px;width:67px;color:#444">P</div><div style="position:absolute;left:561px;top:258px;width:1px;height:20px;background:#c6c6c6"></div><div class="h" style="left:561px;top:258px;width:67px;color:#444">Q</div><div style="position:absolute;left:628px;top:258px;width:1px;height:20px;background:#c6c6c6"></div><div class="h" style="left:628px;top:258px;width:67px;color:#444">R</div><div style="position:absolute;left:695px;top:258px;width:1px;height:20px;background:#c6c6c6"></div><div class="h" style="left:695px;top:258px;width:67px;color:#444">S</div><div style="position:absolute;left:762px;top:258px;width:1px;height:20px;background:#c6c6c6"></div><div class="h" style="left:762px;top:258px;width:67px;color:#444">T</div><div style="position:absolute;left:829px;top:258px;width:1px;height:20px;background:#c6c6c6"></div><div class="h" style="left:829px;top:258px;width:67px;color:#444">U</div><div style="position:absolute;left:896px;top:258px;width:1px;height:20px;background:#c6c6c6"></div><div class="h" style="left:896px;top:258px;width:67px;color:#444">V</div><div style="position:absolute;left:963px;top:258px;width:1px;height:20px;background:#c6c6c6"></div><div class="h" style="left:963px;top:258px;width:67px;color:#444">W</div><div style="position:absolute;left:1030px;top:258px;width:1px;height:20px;background:#c6c6c6"></div><div class="h" style="left:1030px;top:258px;width:67px;color:#444">X</div><div style="position:absolute;left:1097px;top:258px;width:1px;height:20px;background:#c6c6c6"></div><div class="h" style="left:1097px;top:258px;width:67px;color:#444">Y</div><div style="position:absolute;left:1164px;top:258px;width:1px;height:20px;background:#c6c6c6"></div><div class="h" style="left:1164px;top:258px;width:67px;color:#444">Z</div><div style="position:absolute;left:1231px;top:258px;width:1px;height:20px;background:#c6c6c6"></div><div class="h" style="left:1231px;top:258px;width:67px;color:#444">AA</div><div style="position:absolute;left:1298px;top:258px;width:1px;height:20px;background:#c6c6c6"></div><div class="h" style="left:1298px;top:258px;width:67px;color:#444">AB</div><div style="position:absolute;left:1365px;top:258px;width:1px;height:20px;background:#c6c6c6"></div><div class="h" style="left:1365px;top:258px;width:67px;color:#444">AC</div><div style="position:absolute;left:1432px;top:258px;width:1px;height:20px;background:#c6c6c6"></div><div class="h" style="left:1432px;top:258px;width:67px;color:#444">AD</div><div style="position:absolute;left:1499px;top:258px;width:1px;height:20px;background:#c6c6c6"></div><div class="h" style="left:1499px;top:258px;width:67px;color:#444">AE</div><div style="position:absolute;left:1566px;top:258px;width:1px;height:20px;background:#c6c6c6"></div><div class="h" style="left:1566px;top:258px;width:67px;color:#444">AF</div><div style="position:absolute;left:1633px;top:258px;width:1px;height:20px;background:#c6c6c6"></div><div class="h" style="left:1633px;top:258px;width:67px;color:#444">AG</div><div style="position:absolute;left:1700px;top:258px;width:1px;height:20px;background:#c6c6c6"></div><div class="h" style="left:1700px;top:258px;width:67px;color:#444">AH</div><div style="position:absolute;left:1767px;top:258px;width:1px;height:20px;background:#c6c6c6"></div><div class="h" style="left:1767px;top:258px;width:67px;color:#444">AI</div><div style="position:absolute;left:1834px;top:258px;width:1px;height:20px;background:#c6c6c6"></div><div class="h" style="left:1834px;top:258px;width:67px;color:#444">AJ</div><div style="position:absolute;left:1901px;top:258px;width:1px;height:20px;background:#c6c6c6"></div><div style="position:absolute;left:0px;top:279px;width:25px;height:696px;background:#e6e6e6"></div><div style="position:absolute;left:25px;top:258px;width:1px;height:717px;background:#bdbdbd"></div><div style="position:absolute;left:0px;top:301px;width:25px;height:1px;background:#c6c6c6"></div><div class="h" style="left:0px;top:279px;width:25px;height:22px;line-height:24px;color:#444">1</div><div style="position:absolute;left:0px;top:323px;width:25px;height:1px;background:#c6c6c6"></div><div class="h" style="left:0px;top:301px;width:25px;height:22px;line-height:24px;color:#444">2</div><div style="position:absolute;left:0px;top:345px;width:25px;height:1px;background:#c6c6c6"></div><div class="h" style="left:0px;top:323px;width:25px;height:22px;line-height:24px;color:#444">3</div><div style="position:absolute;left:0px;top:366px;width:25px;height:1px;background:#c6c6c6"></div><div class="h" style="left:0px;top:345px;width:25px;height:21px;line-height:23px;color:#444">4</div><div style="position:absolute;left:0px;top:387px;width:25px;height:1px;background:#c6c6c6"></div><div class="h" style="left:0px;top:366px;width:25px;height:21px;line-height:23px;color:#444">5</div><div style="position:absolute;left:0px;top:408px;width:25px;height:1px;background:#c6c6c6"></div><div class="h" style="left:0px;top:387px;width:25px;height:21px;line-height:23px;color:#444">6</div><div style="position:absolute;left:0px;top:429px;width:25px;height:1px;background:#c6c6c6"></div><div class="h" style="left:0px;top:408px;width:25px;height:21px;line-height:23px;color:#444">7</div><div style="position:absolute;left:0px;top:451px;width:25px;height:1px;background:#c6c6c6"></div><div class="h" style="left:0px;top:429px;width:25px;height:22px;line-height:24px;color:#444">8</div><div style="position:absolute;left:0px;top:473px;width:25px;height:1px;background:#c6c6c6"></div><div class="h" style="left:0px;top:451px;width:25px;height:22px;line-height:24px;color:#444">9</div><div style="position:absolute;left:0px;top:494px;width:25px;height:1px;background:#c6c6c6"></div><div class="h" style="left:0px;top:473px;width:25px;height:21px;line-height:23px;color:#444">10</div><div style="position:absolute;left:0px;top:515px;width:25px;height:1px;background:#c6c6c6"></div><div class="h" style="left:0px;top:494px;width:25px;height:21px;line-height:23px;color:#444">11</div><div style="position:absolute;left:0px;top:536px;width:25px;height:1px;background:#c6c6c6"></div><div class="h" style="left:0px;top:515px;width:25px;height:21px;line-height:23px;color:#444">12</div><div style="position:absolute;left:0px;top:557px;width:25px;height:1px;background:#c6c6c6"></div><div class="h" style="left:0px;top:536px;width:25px;height:21px;line-height:23px;color:#444">13</div><div style="position:absolute;left:0px;top:578px;width:25px;height:1px;background:#c6c6c6"></div><div class="h" style="left:0px;top:557px;width:25px;height:21px;line-height:23px;color:#444">14</div><div style="position:absolute;left:0px;top:599px;width:25px;height:1px;background:#c6c6c6"></div><div class="h" style="left:0px;top:578px;width:25px;height:21px;line-height:23px;color:#444">15</div><div style="position:absolute;left:0px;top:620px;width:25px;height:1px;background:#c6c6c6"></div><div class="h" style="left:0px;top:599px;width:25px;height:21px;line-height:23px;color:#444">16</div><div style="position:absolute;left:0px;top:641px;width:25px;height:1px;background:#c6c6c6"></div><div class="h" style="left:0px;top:620px;width:25px;height:21px;line-height:23px;color:#444">17</div><div style="position:absolute;left:0px;top:662px;width:25px;height:1px;background:#c6c6c6"></div><div class="h" style="left:0px;top:641px;width:25px;height:21px;line-height:23px;color:#444">18</div><div style="position:absolute;left:0px;top:684px;width:25px;height:1px;background:#c6c6c6"></div><div class="h" style="left:0px;top:662px;width:25px;height:22px;line-height:24px;color:#444">19</div><div style="position:absolute;left:0px;top:705px;width:25px;height:1px;background:#c6c6c6"></div><div class="h" style="left:0px;top:684px;width:25px;height:21px;line-height:23px;color:#444">20</div><div style="position:absolute;left:0px;top:726px;width:25px;height:1px;background:#c6c6c6"></div><div class="h" style="left:0px;top:705px;width:25px;height:21px;line-height:23px;color:#444">21</div><div style="position:absolute;left:0px;top:747px;width:25px;height:1px;background:#c6c6c6"></div><div class="h" style="left:0px;top:726px;width:25px;height:21px;line-height:23px;color:#444">22</div><div style="position:absolute;left:0px;top:768px;width:25px;height:1px;background:#c6c6c6"></div><div class="h" style="left:0px;top:747px;width:25px;height:21px;line-height:23px;color:#444">23</div><div style="position:absolute;left:0px;top:789px;width:25px;height:1px;background:#c6c6c6"></div><div class="h" style="left:0px;top:768px;width:25px;height:21px;line-height:23px;color:#444">24</div><div style="position:absolute;left:0px;top:810px;width:25px;height:1px;background:#c6c6c6"></div><div class="h" style="left:0px;top:789px;width:25px;height:21px;line-height:23px;color:#444">25</div><div style="position:absolute;left:0px;top:831px;width:25px;height:1px;background:#c6c6c6"></div><div class="h" style="left:0px;top:810px;width:25px;height:21px;line-height:23px;color:#444">26</div><div style="position:absolute;left:0px;top:852px;width:25px;height:1px;background:#c6c6c6"></div><div class="h" style="left:0px;top:831px;width:25px;height:21px;line-height:23px;color:#444">27</div><div style="position:absolute;left:0px;top:874px;width:25px;height:1px;background:#c6c6c6"></div><div class="h" style="left:0px;top:852px;width:25px;height:22px;line-height:24px;color:#444">28</div><div style="position:absolute;left:0px;top:896px;width:25px;height:1px;background:#c6c6c6"></div><div class="h" style="left:0px;top:874px;width:25px;height:22px;line-height:24px;color:#444">29</div><div style="position:absolute;left:0px;top:917px;width:25px;height:1px;background:#c6c6c6"></div><div class="h" style="left:0px;top:896px;width:25px;height:21px;line-height:23px;color:#444">30</div><div style="position:absolute;left:0px;top:938px;width:25px;height:1px;background:#c6c6c6"></div><div class="h" style="left:0px;top:917px;width:25px;height:21px;line-height:23px;color:#444">31</div><div style="position:absolute;left:0px;top:959px;width:25px;height:1px;background:#c6c6c6"></div><div class="h" style="left:0px;top:938px;width:25px;height:21px;line-height:23px;color:#444">32</div><div style="position:absolute;left:0px;top:960px;width:25px;height:21px;background:#d2d2d2"></div><div style="position:absolute;left:24px;top:960px;width:2px;height:21px;background:#217346"></div><div style="position:absolute;left:0px;top:980px;width:25px;height:1px;background:#c6c6c6"></div><div class="h" style="left:0px;top:959px;width:25px;height:21px;line-height:23px;color:#217346">33</div><svg style="position:absolute;left:0;top:258px" width="25" height="21"><polygon points="22,5 22,18 9,18" fill="#b4b4b4"/></svg><div style="position:absolute;left:0px;top:0px;width:1920px;height:81px;background:#217346"></div><svg style="position:absolute;left:1300px;top:0" width="620" height="81" viewBox="0 0 620 81"><g fill="#236843"><path d="M20,20 C25,8 45,5 70,7 C85,8 95,4 100,0 L265,0 C266,15 262,30 262,43 C240,48 200,55 175,60 C150,62 130,58 110,52 C90,48 70,45 40,47 C25,47 18,35 20,20 Z"/><path d="M262,0 H465 C470,10 466,25 460,40 C440,52 400,57 320,60 C300,60 290,55 262,43 Z"/><path d="M465,0 C470,10 470,25 462,40 C480,35 500,28 510,15 C515,8 515,3 512,0 Z" opacity="0.7"/><path d="M545,35 C548,27 560,22 572,25 C590,30 600,45 595,55 C585,62 560,62 550,55 C544,50 543,42 545,35 Z" opacity="0.8"/><path d="M490,5 C500,0 520,2 525,12 C528,22 515,28 500,25 C488,22 485,12 490,5 Z" opacity="0.5"/></g></svg><svg style="position:absolute;left:26px;top:11px" width="18" height="18" viewBox="0 0 18 18"><rect x="1" y="1" width="16" height="16" rx="1" fill="#fff"/><rect x="2.8" y="2.8" width="12.4" height="6.5" fill="#217346"/><rect x="4.5" y="11.3" width="9" height="5.7" fill="#217346"/><rect x="6.3" y="12.8" width="5.2" height="4.2" fill="#fff"/><rect x="7.6" y="12.8" width="2.4" height="4.2" fill="#217346"/></svg><svg style="position:absolute;left:59px;top:11px" width="100" height="20" viewBox="0 0 100 20"><path d="M5,8 H12 A5.5,5.5 0 0 1 12,19" stroke="#64a37f" stroke-width="2.8" fill="none"/><path d="M1,8 L7,2.5 V13.5 Z" fill="#64a37f"/><path d="M30,8 l3,3 l3,-3" stroke="#5c9c78" stroke-width="1" fill="none"/><path d="M65,8 H58 A5.5,5.5 0 0 0 58,19" stroke="#64a37f" stroke-width="2.8" fill="none"/><path d="M69,8 L63,2.5 V13.5 Z" fill="#64a37f"/><path d="M79,8 l3,3 l3,-3" stroke="#5c9c78" stroke-width="1" fill="none"/></svg><svg style="position:absolute;left:161px;top:15px" width="10" height="12" viewBox="0 0 10 12"><rect x="1" y="2" width="7" height="1.3" fill="#fff"/><polygon points="1,5 8,5 4.5,9" fill="#fff"/></svg><div style="position:absolute;left:867px;top:11.5px;font-size:16px;line-height:16px;height:16px;color:#fff;white-space:nowrap;font-weight:normal;transform:scaleX(1.010);transform-origin:0 50%;">計算2020210609  -  Excel</div><div style="position:absolute;left:1380px;top:12.0px;font-size:15px;line-height:15px;height:15px;color:#fff;white-space:nowrap;font-weight:normal;transform:scaleX(1.098);transform-origin:0 50%;">dryyourtearswithlove1@gmail.com</div><div style="position:absolute;left:1647px;top:5px;width:30px;height:30px;border-radius:50%;background:#d8d8d8;color:#777;font-size:14px;line-height:30px;text-align:center">D</div><svg style="position:absolute;left:1710px;top:11px" width="20" height="18" viewBox="0 0 20 18"><rect x="1.5" y="1.5" width="17" height="14" fill="none" stroke="#fff" stroke-width="1.3"/><line x1="1.5" y1="4.5" x2="18.5" y2="4.5" stroke="#fff" stroke-width="1.3"/><path d="M10,14 V7 M7,10 L10,7 L13,10" stroke="#fff" stroke-width="1.3" fill="none"/></svg><div style="position:absolute;left:1770px;top:19px;width:15px;height:1.3px;background:#fff"></div><svg style="position:absolute;left:1826px;top:12px" width="16" height="16" viewBox="0 0 16 16"><rect x="1" y="4" width="10" height="10" fill="none" stroke="#fff" stroke-width="1.3"/><path d="M4,4 V1 H14 V11 H11" fill="none" stroke="#fff" stroke-width="1.3"/></svg><svg style="position:absolute;left:1883px;top:12px" width="16" height="16" viewBox="0 0 16 16"><path d="M1,1 L15,15 M15,1 L1,15" stroke="#fff" stroke-width="1.4"/></svg><div style="position:absolute;left:76px;top:43px;width:61px;height:38px;background:#f3f3f3"></div><div style="position:absolute;left:16px;top:53.5px;font-size:15px;line-height:15px;height:15px;color:#fff;white-space:nowrap;font-weight:normal;transform:scaleX(0.700);transform-origin:0 50%;">ファイル</div><div style="position:absolute;left:88px;top:53.5px;font-size:15px;line-height:15px;height:15px;color:#217346;white-space:nowrap;font-weight:normal;transform:scaleX(0.800);transform-origin:0 50%;">ホーム</div><div style="position:absolute;left:151px;top:53.5px;font-size:15px;line-height:15px;height:15px;color:#fff;white-space:nowrap;font-weight:normal;transform:scaleX(0.967);transform-origin:0 50%;">挿入</div><div style="position:absolute;left:208px;top:53.5px;font-size:15px;line-height:15px;height:15px;color:#fff;white-space:nowrap;font-weight:normal;transform:scaleX(0.773);transform-origin:0 50%;">ページ レイアウト</div><div style="position:absolute;left:331px;top:53.5px;font-size:15px;line-height:15px;height:15px;color:#fff;white-space:nowrap;font-weight:normal;transform:scaleX(0.967);transform-origin:0 50%;">数式</div><div style="position:absolute;left:388px;top:53.5px;font-size:15px;line-height:15px;height:15px;color:#fff;white-space:nowrap;font-weight:normal;transform:scaleX(0.800);transform-origin:0 50%;">データ</div><div style="position:absolute;left:448px;top:53.5px;font-size:15px;line-height:15px;height:15px;color:#fff;white-space:nowrap;font-weight:normal;transform:scaleX(1.000);transform-origin:0 50%;">校閲</div><div style="position:absolute;left:506px;top:53.5px;font-size:15px;line-height:15px;height:15px;color:#fff;white-space:nowrap;font-weight:normal;transform:scaleX(1.000);transform-origin:0 50%;">表示</div><div style="position:absolute;left:562px;top:53.5px;font-size:15px;line-height:15px;height:15px;color:#fff;white-space:nowrap;font-weight:normal;transform:scaleX(0.800);transform-origin:0 50%;">ヘルプ</div><div style="position:absolute;left:661px;top:53.5px;font-size:15px;line-height:15px;height:15px;color:#fff;white-space:nowrap;font-weight:normal;transform:scaleX(0.822);transform-origin:0 50%;">何をしますか</div><svg style="position:absolute;left:630px;top:51px" width="20" height="22" viewBox="0 0 20 22"><path d="M10,1.5 A6.5,6.5 0 0 0 5.5,12.5 C6.5,13.5 7,14.5 7,16 H13 C13,14.5 13.5,13.5 14.5,12.5 A6.5,6.5 0 0 0 10,1.5 Z" fill="none" stroke="#fff" stroke-width="1.3"/><path d="M7.5,18.5 H12.5 M8.5,20.5 H11.5" stroke="#fff" stroke-width="1.3"/></svg><svg style="position:absolute;left:1839px;top:53px" width="18" height="18" viewBox="0 0 18 18"><circle cx="8" cy="5.5" r="4.3" fill="none" stroke="#fff" stroke-width="1.3"/><path d="M1,17 C1,11 4,10 8,10 C10,10 11,10.5 12,11" fill="none" stroke="#fff" stroke-width="1.3"/><path d="M14,11 V17 M11,14 H17" stroke="#fff" stroke-width="1.3"/></svg><div style="position:absolute;left:1862px;top:54.5px;font-size:15px;line-height:15px;height:15px;color:#fff;white-space:nowrap;font-weight:normal;transform:scaleX(1.000);transform-origin:0 50%;">共有</div><div style="position:absolute;left:0px;top:81px;width:1920px;height:116px;background:#f3f3f3"></div><div style="position:absolute;left:0px;top:197px;width:1920px;height:1px;background:#d5d5d5"></div><div style="position:absolute;left:245px;top:87px;width:1px;height:105px;background:#c8c8c8"></div><div style="position:absolute;left:590px;top:87px;width:1px;height:105px;background:#c8c8c8"></div><div style="position:absolute;left:977px;top:87px;width:1px;height:105px;background:#c8c8c8"></div><div style="position:absolute;left:1171px;top:87px;width:1px;height:105px;background:#c8c8c8"></div><div style="position:absolute;left:1400px;top:87px;width:1px;height:105px;background:#c8c8c8"></div><div style="position:absolute;left:1576px;top:87px;width:1px;height:105px;background:#c8c8c8"></div><div style="position:absolute;left:1848px;top:87px;width:1px;height:105px;background:#c8c8c8"></div><div style="position:absolute;left:75px;top:179.0px;font-size:14px;line-height:14px;height:14px;color:#444;white-space:nowrap;font-weight:normal;transform:scaleX(0.755);transform-origin:0 50%;">クリップボード</div><div style="position:absolute;left:382px;top:179.0px;font-size:14px;line-height:14px;height:14px;color:#444;white-space:nowrap;font-weight:normal;transform:scaleX(0.893);transform-origin:0 50%;">フォント</div><div style="position:absolute;left:758px;top:179.0px;font-size:14px;line-height:14px;height:14px;color:#444;white-space:nowrap;font-weight:normal;transform:scaleX(1.071);transform-origin:0 50%;">配置</div><div style="position:absolute;left:1049px;top:179.0px;font-size:14px;line-height:14px;height:14px;color:#444;white-space:nowrap;font-weight:normal;transform:scaleX(1.036);transform-origin:0 50%;">数値</div><div style="position:absolute;left:1262px;top:179.0px;font-size:14px;line-height:14px;height:14px;color:#444;white-space:nowrap;font-weight:normal;transform:scaleX(0.804);transform-origin:0 50%;">スタイル</div><div style="position:absolute;left:1476px;top:179.0px;font-size:14px;line-height:14px;height:14px;color:#444;white-space:nowrap;font-weight:normal;transform:scaleX(0.821);transform-origin:0 50%;">セル</div><div style="position:absolute;left:1695px;top:179.0px;font-size:14px;line-height:14px;height:14px;color:#444;white-space:nowrap;font-weight:normal;transform:scaleX(1.071);transform-origin:0 50%;">編集</div><svg style="position:absolute;left:232px;top:182px" width="10" height="10" viewBox="0 0 10 10"><path d="M0.5,9 V0.5 H9" stroke="#777" fill="none"/><path d="M3,3 L8.5,8.5 M8.5,4.5 V8.5 H4.5" stroke="#777" fill="none"/></svg><svg style="position:absolute;left:575px;top:182px" width="10" height="10" viewBox="0 0 10 10"><path d="M0.5,9 V0.5 H9" stroke="#777" fill="none"/><path d="M3,3 L8.5,8.5 M8.5,4.5 V8.5 H4.5" stroke="#777" fill="none"/></svg><svg style="position:absolute;left:963px;top:182px" width="10" height="10" viewBox="0 0 10 10"><path d="M0.5,9 V0.5 H9" stroke="#777" fill="none"/><path d="M3,3 L8.5,8.5 M8.5,4.5 V8.5 H4.5" stroke="#777" fill="none"/></svg><svg style="position:absolute;left:1157px;top:182px" width="10" height="10" viewBox="0 0 10 10"><path d="M0.5,9 V0.5 H9" stroke="#777" fill="none"/><path d="M3,3 L8.5,8.5 M8.5,4.5 V8.5 H4.5" stroke="#777" fill="none"/></svg><svg style="position:absolute;left:1896px;top:182px" width="14" height="8" viewBox="0 0 14 8"><path d="M1,7 L7,1 L13,7" stroke="#555" stroke-width="1.2" fill="none"/></svg><svg style="position:absolute;left:22px;top:90px" width="40" height="42" viewBox="0 0 40 42"><rect x="2" y="4" width="27" height="32" rx="1.5" fill="#e9c37b"/><rect x="7" y="1.5" width="17" height="6" rx="1" fill="#6d6d6d"/><rect x="13" y="0" width="5" height="4" fill="#6d6d6d"/><rect x="14" y="1" width="3" height="2" fill="#f3f3f3"/><path d="M21.5,20.5 H32 L36.5,25 V40.5 H21.5 Z" fill="#fff" stroke="#6d6d6d" stroke-width="1"/></svg><div style="position:absolute;left:12px;top:134.0px;font-size:14px;line-height:14px;height:14px;color:#262626;white-space:nowrap;font-weight:normal;transform:scaleX(0.911);transform-origin:0 50%;">貼り付け</div><svg style="position:absolute;left:35px;top:157px" width="8" height="5" viewBox="0 0 8 5"><path d="M0.5,0.5 L4,4 L7.5,0.5" stroke="#555" stroke-width="1.1" fill="none"/></svg><svg style="position:absolute;left:70px;top:88px" width="20" height="20" viewBox="0 0 20 20"><path d="M4,1 L13,13 M14,1 L6,13" stroke="#555" stroke-width="1.6"/><circle cx="5" cy="15.5" r="3" fill="none" stroke="#3f7fc4" stroke-width="1.4"/><circle cx="14" cy="15.5" r="3" fill="none" stroke="#3f7fc4" stroke-width="1.4"/></svg><div style="position:absolute;left:94px;top:92.0px;font-size:14px;line-height:14px;height:14px;color:#262626;white-space:nowrap;font-weight:normal;transform:scaleX(0.857);transform-origin:0 50%;">切り取り</div><svg style="position:absolute;left:70px;top:117px" width="20" height="20" viewBox="0 0 20 20"><path d="M1.5,1.5 H8 L10,3.5 V13.5 H1.5 Z" fill="#fff" stroke="#666"/><path d="M7.5,6.5 H14 L17,9.5 V18.5 H7.5 Z" fill="#fff" stroke="#666"/><path d="M3,5 H7 M3,7.5 H7 M3,10 H7 M9,10.5 H15 M9,13 H15 M9,15.5 H15" stroke="#3f7fc4" stroke-width="1"/></svg><div style="position:absolute;left:94px;top:121.0px;font-size:14px;line-height:14px;height:14px;color:#262626;white-space:nowrap;font-weight:normal;transform:scaleX(0.762);transform-origin:0 50%;">コピー</div><svg style="position:absolute;left:141px;top:126px" width="8" height="5" viewBox="0 0 8 5"><path d="M0.5,0.5 L4,4 L7.5,0.5" stroke="#555" stroke-width="1.1" fill="none"/></svg><svg style="position:absolute;left:70px;top:146px" width="20" height="18" viewBox="0 0 20 18"><path d="M1,12 L7,7 L11,11 L6,17 Z" fill="#e9c37b"/><path d="M8,7 L14,1.5 L18,5 L12,10.5 Z" fill="#6d6d6d"/></svg><div style="position:absolute;left:94px;top:150.0px;font-size:14px;line-height:14px;height:14px;color:#262626;white-space:nowrap;font-weight:normal;transform:scaleX(0.924);transform-origin:0 50%;">書式のコピー/貼り付け</div><div style="position:absolute;left:256px;top:94px;width:213px;height:29px;background:#fff;box-sizing:border-box;border:1px solid #a8a8a8"></div><div style="position:absolute;left:259px;top:102.0px;font-size:14px;line-height:14px;height:14px;color:#262626;white-space:nowrap;font-weight:normal;transform:scaleX(0.843);transform-origin:0 50%;">游ゴシック</div><svg style="position:absolute;left:455px;top:106px" width="8" height="5"><polygon points="0,0 8,0 4,4.5" fill="#444"/></svg><div style="position:absolute;left:471px;top:94px;width:50px;height:29px;background:#fff;box-sizing:border-box;border:1px solid #a8a8a8"></div><div style="position:absolute;left:476px;top:102.0px;font-size:14px;line-height:14px;height:14px;color:#262626;white-space:nowrap;font-weight:normal;">11</div><svg style="position:absolute;left:506px;top:106px" width="8" height="5"><polygon points="0,0 8,0 4,4.5" fill="#444"/></svg><div style="position:absolute;left:530px;top:101.5px;font-size:15px;line-height:15px;height:15px;color:#555;white-space:nowrap;font-weight:normal;">A</div><svg style="position:absolute;left:539px;top:99px" width="7" height="4"><polygon points="0,4 7,4 3.5,0" fill="#3f7fc4"/></svg><div style="position:absolute;left:560px;top:104.0px;font-size:14px;line-height:14px;height:14px;color:#555;white-space:nowrap;font-weight:normal;">A</div><svg style="position:absolute;left:569px;top:100px" width="7" height="4"><polygon points="0,0 7,0 3.5,4" fill="#3f7fc4"/></svg><div style="position:absolute;left:263px;top:139.5px;font-size:15px;line-height:15px;height:15px;color:#444;white-space:nowrap;font-weight:bold;">B</div><div style="position:absolute;left:296px;top:139.5px;font-size:15px;line-height:15px;height:15px;color:#444;white-space:nowrap;font-weight:normal;font-style:italic;font-family:'Liberation Serif',serif;font-weight:bold">I</div><div style="position:absolute;left:323px;top:138.5px;font-size:15px;line-height:15px;height:15px;color:#444;white-space:nowrap;font-weight:normal;">U</div><div style="position:absolute;left:323px;top:154px;width:11px;height:1.2px;background:#444"></div><svg style="position:absolute;left:349px;top:145px" width="8" height="5" viewBox="0 0 8 5"><path d="M0.5,0.5 L4,4 L7.5,0.5" stroke="#555" stroke-width="1.1" fill="none"/></svg><div style="position:absolute;left:367px;top:135px;width:1px;height:26px;background:#d0d0d0"></div><svg style="position:absolute;left:377px;top:138px" width="18" height="18" viewBox="0 0 18 18"><path d="M0.5,0.5 H17.5 V17 H0.5 Z M9,0.5 V17 M0.5,9 H17.5" stroke="#888" stroke-dasharray="1,1" fill="none"/><path d="M0,17.5 H18" stroke="#555"/></svg><svg style="position:absolute;left:405px;top:145px" width="8" height="5" viewBox="0 0 8 5"><path d="M0.5,0.5 L4,4 L7.5,0.5" stroke="#555" stroke-width="1.1" fill="none"/></svg><div style="position:absolute;left:423px;top:135px;width:1px;height:26px;background:#d0d0d0"></div><svg style="position:absolute;left:432px;top:136px" width="22" height="22" viewBox="0 0 22 22"><path d="M3,10 L9,4 L15,10 L9,16 Z" fill="#fff" stroke="#555"/><path d="M9,4 V1" stroke="#555"/><path d="M15,10 C17,8 18,10 18,12" stroke="#3f7fc4" stroke-width="1.5" fill="none"/><rect x="0" y="16" width="20" height="5" fill="#ffff00"/></svg><svg style="position:absolute;left:461px;top:145px" width="8" height="5" viewBox="0 0 8 5"><path d="M0.5,0.5 L4,4 L7.5,0.5" stroke="#555" stroke-width="1.1" fill="none"/></svg><div style="position:absolute;left:482px;top:134.5px;font-size:17px;line-height:17px;height:17px;color:#444;white-space:nowrap;font-weight:normal;">A</div><div style="position:absolute;left:481px;top:152px;width:20px;height:5px;background:#ff0000"></div><svg style="position:absolute;left:510px;top:145px" width="8" height="5" viewBox="0 0 8 5"><path d="M0.5,0.5 L4,4 L7.5,0.5" stroke="#555" stroke-width="1.1" fill="none"/></svg><div style="position:absolute;left:528px;top:135px;width:1px;height:26px;background:#d0d0d0"></div><div style="position:absolute;left:541px;top:144.0px;font-size:12px;line-height:12px;height:12px;color:#555;white-space:nowrap;font-weight:normal;">亜</div><div style="position:absolute;left:543px;top:135.0px;font-size:8px;line-height:8px;height:8px;color:#555;white-space:nowrap;font-weight:normal;">ア</div><svg style="position:absolute;left:566px;top:145px" width="8" height="5" viewBox="0 0 8 5"><path d="M0.5,0.5 L4,4 L7.5,0.5" stroke="#555" stroke-width="1.1" fill="none"/></svg><div style="position:absolute;left:630px;top:94px;width:28px;height:29px;background:#c5c5c5;box-sizing:border-box;border:1px solid #7a7a7a"></div><div style="position:absolute;left:600px;top:133px;width:28px;height:29px;background:#c5c5c5;box-sizing:border-box;border:1px solid #7a7a7a"></div><svg style="position:absolute;left:590px;top:88px" width="180" height="80" viewBox="0 0 180 80"><rect x="15" y="10.700000000000003" width="18" height="1.1" fill="#595959"/><rect x="17" y="13.700000000000003" width="14" height="1.1" fill="#595959"/><rect x="15" y="16.700000000000003" width="18" height="1.1" fill="#595959"/><rect x="45" y="15" width="18" height="1.1" fill="#595959"/><rect x="47" y="18" width="14" height="1.1" fill="#595959"/><rect x="45" y="21" width="18" height="1.1" fill="#595959"/><rect x="47" y="24" width="14" height="1.1" fill="#595959"/><rect x="75" y="19" width="18" height="1.1" fill="#595959"/><rect x="77" y="22" width="14" height="1.1" fill="#595959"/><rect x="75" y="25" width="18" height="1.1" fill="#595959"/><rect x="77" y="28" width="14" height="1.1" fill="#595959"/><rect x="17" y="54" width="14" height="1.1" fill="#595959"/><rect x="17" y="57" width="11" height="1.1" fill="#595959"/><rect x="17" y="60" width="14" height="1.1" fill="#595959"/><rect x="17" y="63" width="11" height="1.1" fill="#595959"/><rect x="46" y="54" width="16" height="1.1" fill="#595959"/><rect x="49" y="57" width="10" height="1.1" fill="#595959"/><rect x="46" y="60" width="16" height="1.1" fill="#595959"/><rect x="49" y="63" width="10" height="1.1" fill="#595959"/><rect x="77" y="54" width="14" height="1.1" fill="#595959"/><rect x="80" y="57" width="11" height="1.1" fill="#595959"/><rect x="77" y="60" width="14" height="1.1" fill="#595959"/><rect x="80" y="63" width="11" height="1.1" fill="#595959"/><rect x="112" y="51" width="18" height="1.1" fill="#595959"/><rect x="112" y="66" width="18" height="1.1" fill="#595959"/><rect x="121" y="54" width="9" height="1.1" fill="#595959"/><rect x="121" y="57" width="9" height="1.1" fill="#595959"/><rect x="121" y="60" width="9" height="1.1" fill="#595959"/><rect x="121" y="63" width="9" height="1.1" fill="#595959"/><rect x="142" y="51" width="18" height="1.1" fill="#595959"/><rect x="142" y="66" width="18" height="1.1" fill="#595959"/><rect x="151" y="54" width="9" height="1.1" fill="#595959"/><rect x="151" y="57" width="9" height="1.1" fill="#595959"/><rect x="151" y="60" width="9" height="1.1" fill="#595959"/><rect x="151" y="63" width="9" height="1.1" fill="#595959"/><path d="M118,59 H112 M115,55.5 L112,59 L115,62.5" stroke="#3f7fc4" stroke-width="2.2" fill="none"/><path d="M142,59 H148 M145,55.5 L148,59 L145,62.5" stroke="#3f7fc4" stroke-width="2.2" fill="none"/></svg><div style="position:absolute;left:692px;top:96px;width:1px;height:26px;background:#d0d0d0"></div><div style="position:absolute;left:692px;top:135px;width:1px;height:26px;background:#d0d0d0"></div><svg style="position:absolute;left:699px;top:97px" width="24" height="22" viewBox="0 0 24 22"><text x="7" y="12" font-size="13" fill="#595959" text-anchor="middle" transform="rotate(-45 8 9)" font-family="Liberation Sans">ab</text><path d="M10,20 L20.5,9.5 M16,9 H21 V14" stroke="#595959" stroke-width="1.3" fill="none"/></svg><svg style="position:absolute;left:727px;top:106px" width="8" height="5" viewBox="0 0 8 5"><path d="M0.5,0.5 L4,4 L7.5,0.5" stroke="#555" stroke-width="1.1" fill="none"/></svg><div style="position:absolute;left:760px;top:93px;width:1px;height:68px;background:#d0d0d0"></div><svg style="position:absolute;left:771px;top:98px" width="20" height="22" viewBox="0 0 20 22"><text x="1" y="10" font-size="11.5" fill="#595959" font-family="Liberation Sans">ab</text><text x="1" y="19.5" font-size="11.5" fill="#595959" font-family="Liberation Sans">c</text><path d="M17,12 V16 H9.5 M12,13.5 L9.5,16 L12,18.5" stroke="#3f7fc4" stroke-width="1.3" fill="none"/></svg><div style="position:absolute;left:794px;top:102.0px;font-size:14px;line-height:14px;height:14px;color:#262626;white-space:nowrap;font-weight:normal;transform:scaleX(0.935);transform-origin:0 50%;">折り返して全体を表示する</div><svg style="position:absolute;left:770px;top:137px" width="20" height="20" viewBox="0 0 20 20"><rect x="0.5" y="0.5" width="19" height="19" fill="#fff" stroke="#777"/><path d="M0.5,5.5 H19.5 M0.5,14.5 H19.5 M7,0.5 V5.5 M13,14.5 V19.5" stroke="#777"/><path d="M3,10 H17 M5.5,7.5 L3,10 L5.5,12.5 M14.5,7.5 L17,10 L14.5,12.5" stroke="#3f7fc4" stroke-width="1.2" fill="none"/></svg><div style="position:absolute;left:794px;top:141.0px;font-size:14px;line-height:14px;height:14px;color:#262626;white-space:nowrap;font-weight:normal;transform:scaleX(0.942);transform-origin:0 50%;">セルを結合して中央揃え</div><svg style="position:absolute;left:953px;top:145px" width="8" height="5" viewBox="0 0 8 5"><path d="M0.5,0.5 L4,4 L7.5,0.5" stroke="#555" stroke-width="1.1" fill="none"/></svg><div style="position:absolute;left:988px;top:94px;width:174px;height:29px;background:#fff;box-sizing:border-box;border:1px solid #a8a8a8"></div><div style="position:absolute;left:991px;top:102.0px;font-size:14px;line-height:14px;height:14px;color:#262626;white-space:nowrap;font-weight:normal;transform:scaleX(1.071);transform-origin:0 50%;">標準</div><svg style="position:absolute;left:1149px;top:106px" width="8" height="5"><polygon points="0,0 8,0 4,4.5" fill="#444"/></svg><svg style="position:absolute;left:991px;top:137px" width="22" height="22" viewBox="0 0 22 22"><rect x="1" y="1" width="19" height="11" fill="#3f7fc4"/><path d="M4,4 H17 V7 C14,8 13,10 12,10 H4 Z" fill="#fff"/><circle cx="9.5" cy="6" r="2" fill="#3f7fc4"/><g fill="#f3f3f3" stroke="#e8b96a" stroke-width="1.2"><ellipse cx="7.5" cy="19.5" rx="3.8" ry="1.6"/><ellipse cx="7.5" cy="17" rx="3.8" ry="1.6"/><ellipse cx="7.5" cy="14.5" rx="3.8" ry="1.6"/><ellipse cx="15.5" cy="16" rx="3.8" ry="1.6"/><ellipse cx="15.5" cy="13.5" rx="3.8" ry="1.6"/><ellipse cx="15.5" cy="11" rx="3.8" ry="1.6"/></g></svg><svg style="position:absolute;left:1020px;top:145px" width="8" height="5" viewBox="0 0 8 5"><path d="M0.5,0.5 L4,4 L7.5,0.5" stroke="#555" stroke-width="1.1" fill="none"/></svg><div style="position:absolute;left:1042px;top:138.0px;font-size:18px;line-height:18px;height:18px;color:#555;white-space:nowrap;font-weight:normal;">%</div><svg style="position:absolute;left:1077px;top:142px" width="8" height="11" viewBox="0 0 8 11"><circle cx="4.2" cy="3.3" r="2.6" fill="#555"/><path d="M6.6,3.5 C6.8,6.5 5,9 2,10.3 L1.6,9.4 C3.5,8.2 4.6,6.5 4.4,4.5 Z" fill="#555"/></svg><div style="position:absolute;left:1100px;top:135px;width:1px;height:26px;background:#d0d0d0"></div><svg style="position:absolute;left:1107px;top:137px" width="22" height="22" viewBox="0 0 22 22"><path d="M8,5 H2 M4.5,2.5 L2,5 L4.5,7.5" stroke="#3f7fc4" stroke-width="1.6" fill="none"/><text x="9" y="9" font-size="8.5" fill="#555" font-family="Liberation Sans">.0</text><text x="5" y="19" font-size="8.5" fill="#555" font-family="Liberation Sans">.00</text></svg><svg style="position:absolute;left:1138px;top:137px" width="22" height="22" viewBox="0 0 22 22"><text x="5" y="9" font-size="8.5" fill="#555" font-family="Liberation Sans">.00</text><path d="M2,15 H8 M5.5,12.5 L8,15 L5.5,17.5" stroke="#3f7fc4" stroke-width="1.6" fill="none"/><text x="9" y="19" font-size="8.5" fill="#555" font-family="Liberation Sans">.0</text></svg><svg style="position:absolute;left:1194px;top:93px" width="40" height="36" viewBox="0 0 40 36"><rect x="0.5" y="0.5" width="34" height="28" fill="#fff" stroke="#888"/><path d="M0.5,7.5 H34.5 M0.5,14.5 H34.5 M0.5,21.5 H34.5 M11.5,0.5 V28.5 M23.5,0.5 V28.5" stroke="#bbb"/><rect x="12" y="1" width="6" height="6" fill="#d9653b"/><rect x="12" y="8" width="10" height="6" fill="#3f7fc4"/><rect x="12" y="15" width="7" height="6" fill="#d9653b"/><rect x="12" y="22" width="5" height="6" fill="#3f7fc4"/><rect x="18.5" y="19.5" width="19" height="15" fill="#fff" stroke="#666"/><text x="23" y="32" font-size="13" fill="#444" font-family="Liberation Sans">≠</text></svg><div style="position:absolute;left:1183px;top:133.0px;font-size:14px;line-height:14px;height:14px;color:#262626;white-space:nowrap;font-weight:normal;transform:scaleX(1.000);transform-origin:0 50%;">条件付き</div><div style="position:absolute;left:1192px;top:152.0px;font-size:14px;line-height:14px;height:14px;color:#262626;white-space:nowrap;font-weight:normal;transform:scaleX(1.071);transform-origin:0 50%;">書式</div><svg style="position:absolute;left:1225px;top:157px" width="8" height="5" viewBox="0 0 8 5"><path d="M0.5,0.5 L4,4 L7.5,0.5" stroke="#555" stroke-width="1.1" fill="none"/></svg><svg style="position:absolute;left:1266px;top:93px" width="40" height="36" viewBox="0 0 40 36"><rect x="0.5" y="0.5" width="32" height="28" fill="#fff" stroke="#888"/><rect x="8" y="8" width="24" height="20" fill="#bcd3ec"/><path d="M0.5,7.5 H32.5 M0.5,14.5 H32.5 M0.5,21.5 H32.5 M8.5,0.5 V28.5 M16.5,0.5 V28.5 M24.5,0.5 V28.5" stroke="#aaa"/><path d="M38,8 L28,26 L24,24 L35,6 Z" fill="#777"/><path d="M20,35 C20,28 23,25 27,26 L25,31 Z" fill="#3f7fc4"/></svg><div style="position:absolute;left:1244px;top:133.0px;font-size:14px;line-height:14px;height:14px;color:#262626;white-space:nowrap;font-weight:normal;transform:scaleX(0.796);transform-origin:0 50%;">テーブルとして</div><div style="position:absolute;left:1248px;top:152.0px;font-size:14px;line-height:14px;height:14px;color:#262626;white-space:nowrap;font-weight:normal;transform:scaleX(1.071);transform-origin:0 50%;">書式設定</div><svg style="position:absolute;left:1312px;top:157px" width="8" height="5" viewBox="0 0 8 5"><path d="M0.5,0.5 L4,4 L7.5,0.5" stroke="#555" stroke-width="1.1" fill="none"/></svg><svg style="position:absolute;left:1339px;top:92px" width="40" height="38" viewBox="0 0 40 38"><rect x="0.5" y="0.5" width="33" height="28" fill="#fff" stroke="#888"/><rect x="8" y="8" width="18" height="13" fill="#bcd3ec"/><path d="M0.5,7.5 H33.5 M0.5,21.5 H33.5 M8.5,0.5 V28.5 M26.5,0.5 V28.5" stroke="#aaa"/><path d="M38,10 L28,28 L24,26 L35,8 Z" fill="#777"/><path d="M20,37 C20,30 23,27 27,28 L25,33 Z" fill="#3f7fc4"/></svg><div style="position:absolute;left:1339px;top:133.0px;font-size:14px;line-height:14px;height:14px;color:#262626;white-space:nowrap;font-weight:normal;transform:scaleX(0.905);transform-origin:0 50%;">セルの</div><div style="position:absolute;left:1328px;top:152.0px;font-size:14px;line-height:14px;height:14px;color:#262626;white-space:nowrap;font-weight:normal;transform:scaleX(0.786);transform-origin:0 50%;">スタイル</div><svg style="position:absolute;left:1378px;top:157px" width="8" height="5" viewBox="0 0 8 5"><path d="M0.5,0.5 L4,4 L7.5,0.5" stroke="#555" stroke-width="1.1" fill="none"/></svg><svg style="position:absolute;left:1416px;top:90px" width="40" height="36" viewBox="0 0 40 36"><rect x="2.5" y="0.5" width="16" height="7" fill="#fff" stroke="#888"/><path d="M10.5,0.5 V7.5" stroke="#888"/><rect x="14.5" y="12.5" width="22" height="8" fill="#bcd3ec" stroke="#888"/><path d="M25.5,12.5 V20.5" stroke="#888"/><path d="M12,16.5 H2 M6,12.5 L2,16.5 L6,20.5" stroke="#3f7fc4" stroke-width="2.2" fill="none"/><rect x="2.5" y="24.5" width="16" height="10" fill="#fff" stroke="#888"/><path d="M10.5,24.5 V34.5 M2.5,29.5 H18.5" stroke="#888"/></svg><div style="position:absolute;left:1421px;top:133.0px;font-size:14px;line-height:14px;height:14px;color:#262626;white-space:nowrap;font-weight:normal;transform:scaleX(1.036);transform-origin:0 50%;">挿入</div><svg style="position:absolute;left:1433px;top:157px" width="8" height="5" viewBox="0 0 8 5"><path d="M0.5,0.5 L4,4 L7.5,0.5" stroke="#555" stroke-width="1.1" fill="none"/></svg><svg style="position:absolute;left:1471px;top:90px" width="40" height="36" viewBox="0 0 40 36"><rect x="2.5" y="0.5" width="16" height="7" fill="#fff" stroke="#888"/><path d="M10.5,0.5 V7.5" stroke="#888"/><rect x="8.5" y="12.5" width="14" height="8" fill="#bcd3ec" stroke="#888"/><path d="M22,9 L35,23 M35,9 L22,23" stroke="#e05a2b" stroke-width="2.2"/><rect x="2.5" y="24.5" width="16" height="10" fill="#fff" stroke="#888"/><path d="M10.5,24.5 V34.5 M2.5,29.5 H18.5" stroke="#888"/></svg><div style="position:absolute;left:1473px;top:133.0px;font-size:14px;line-height:14px;height:14px;color:#262626;white-space:nowrap;font-weight:normal;transform:scaleX(1.071);transform-origin:0 50%;">削除</div><svg style="position:absolute;left:1484px;top:157px" width="8" height="5" viewBox="0 0 8 5"><path d="M0.5,0.5 L4,4 L7.5,0.5" stroke="#555" stroke-width="1.1" fill="none"/></svg><svg style="position:absolute;left:1522px;top:89px" width="38" height="38" viewBox="0 0 38 38"><path d="M2,1 V5 M34,1 V5 M3,3 H33 M7,0.5 L3,3 L7,5.5 M29,0.5 L33,3 L29,5.5" stroke="#3f7fc4" stroke-width="1.2" fill="none"/><rect x="1.5" y="7.5" width="33" height="24" fill="#fff" stroke="#888"/><path d="M1.5,14.5 H34.5 M1.5,22.5 H34.5 M9.5,7.5 V31.5 M18.5,7.5 V31.5 M26.5,7.5 V31.5" stroke="#bbb"/><rect x="10" y="15" width="8" height="14" fill="#3f7fc4"/><path d="M1.5,31.5 V35 H10 L12,32 H16 L18,35 H26" stroke="#888" fill="none"/></svg><div style="position:absolute;left:1525px;top:133.0px;font-size:14px;line-height:14px;height:14px;color:#262626;white-space:nowrap;font-weight:normal;transform:scaleX(1.071);transform-origin:0 50%;">書式</div><svg style="position:absolute;left:1536px;top:157px" width="8" height="5" viewBox="0 0 8 5"><path d="M0.5,0.5 L4,4 L7.5,0.5" stroke="#555" stroke-width="1.1" fill="none"/></svg><svg style="position:absolute;left:1591px;top:89px" width="17" height="18" viewBox="0 0 17 18"><path d="M15.5,4 V1.2 H1.8 L8.5,9 L1.8,16.8 H15.5 V14" stroke="#555" stroke-width="2" fill="none"/></svg><div style="position:absolute;left:1614px;top:92.0px;font-size:14px;line-height:14px;height:14px;color:#262626;white-space:nowrap;font-weight:normal;transform:scaleX(0.935);transform-origin:0 50%;">オート SUM</div><svg style="position:absolute;left:1700px;top:96px" width="8" height="5" viewBox="0 0 8 5"><path d="M0.5,0.5 L4,4 L7.5,0.5" stroke="#555" stroke-width="1.1" fill="none"/></svg><svg style="position:absolute;left:1590px;top:117px" width="20" height="20" viewBox="0 0 20 20"><rect x="1.5" y="2.5" width="16" height="15" fill="#fff" stroke="#666"/><rect x="1" y="1" width="17" height="2.5" fill="#666"/><path d="M9.5,5.5 V14 M6,10.5 L9.5,14 L13,10.5" stroke="#3f7fc4" stroke-width="1.8" fill="none"/></svg><div style="position:absolute;left:1614px;top:121.0px;font-size:14px;line-height:14px;height:14px;color:#262626;white-space:nowrap;font-weight:normal;transform:scaleX(0.714);transform-origin:0 50%;">フィル</div><svg style="position:absolute;left:1650px;top:126px" width="8" height="5" viewBox="0 0 8 5"><path d="M0.5,0.5 L4,4 L7.5,0.5" stroke="#555" stroke-width="1.1" fill="none"/></svg><svg style="position:absolute;left:1591px;top:147px" width="18" height="16" viewBox="0 0 18 16"><path d="M1,11 L10,2 L16,6 L7,15 Z" fill="#e8849b"/><path d="M1,11 L4,8 L10,12 L7,15 Z" fill="#f0b0c0"/></svg><div style="position:absolute;left:1614px;top:150.0px;font-size:14px;line-height:14px;height:14px;color:#262626;white-space:nowrap;font-weight:normal;transform:scaleX(0.714);transform-origin:0 50%;">クリア</div><svg style="position:absolute;left:1650px;top:155px" width="8" height="5" viewBox="0 0 8 5"><path d="M0.5,0.5 L4,4 L7.5,0.5" stroke="#555" stroke-width="1.1" fill="none"/></svg><svg style="position:absolute;left:1732px;top:91px" width="38" height="34" viewBox="0 0 38 34"><text x="0" y="14" font-size="17" fill="#3f7fc4" font-family="Liberation Sans" font-weight="bold">A</text><text x="1" y="32" font-size="17" fill="#9b59b6" font-family="Liberation Sans" font-weight="bold">Z</text><path d="M16,8 H35 L28,17 V26 L24,24 V17 Z" fill="#777"/></svg><div style="position:absolute;left:1719px;top:133.0px;font-size:14px;line-height:14px;height:14px;color:#262626;white-space:nowrap;font-weight:normal;transform:scaleX(0.886);transform-origin:0 50%;">並べ替えと</div><div style="position:absolute;left:1717px;top:152.0px;font-size:14px;line-height:14px;height:14px;color:#262626;white-space:nowrap;font-weight:normal;transform:scaleX(0.757);transform-origin:0 50%;">フィルター</div><svg style="position:absolute;left:1776px;top:157px" width="8" height="5" viewBox="0 0 8 5"><path d="M0.5,0.5 L4,4 L7.5,0.5" stroke="#555" stroke-width="1.1" fill="none"/></svg><svg style="position:absolute;left:1795px;top:90px" width="38" height="36" viewBox="0 0 38 36"><circle cx="21" cy="14" r="11" fill="none" stroke="#3f7fc4" stroke-width="3"/><path d="M13,22 L3,32" stroke="#3f7fc4" stroke-width="4" stroke-linecap="round"/></svg><div style="position:absolute;left:1793px;top:133.0px;font-size:14px;line-height:14px;height:14px;color:#262626;white-space:nowrap;font-weight:normal;transform:scaleX(0.952);transform-origin:0 50%;">検索と</div><div style="position:absolute;left:1790px;top:152.0px;font-size:14px;line-height:14px;height:14px;color:#262626;white-space:nowrap;font-weight:normal;transform:scaleX(1.071);transform-origin:0 50%;">選択</div><svg style="position:absolute;left:1826px;top:157px" width="8" height="5" viewBox="0 0 8 5"><path d="M0.5,0.5 L4,4 L7.5,0.5" stroke="#555" stroke-width="1.1" fill="none"/></svg><div style="position:absolute;left:0px;top:198px;width:1920px;height:60px;background:#e6e6e6"></div><div style="position:absolute;left:6px;top:210px;width:127px;height:36px;background:#fff;box-sizing:border-box;border:1px solid #c6c6c6"></div><div style="position:absolute;left:14px;top:219.5px;font-size:19px;line-height:19px;height:19px;color:#333;white-space:nowrap;font-weight:normal;transform:scaleX(0.946);transform-origin:0 50%;">L33</div><svg style="position:absolute;left:116px;top:226px" width="8" height="5"><polygon points="0,0 8,0 4,4.5" fill="#555"/></svg><div style="position:absolute;left:150px;top:221px;width:2px;height:3px;background:#a0a0a0"></div><div style="position:absolute;left:150px;top:227px;width:2px;height:3px;background:#a0a0a0"></div><div style="position:absolute;left:150px;top:233px;width:2px;height:3px;background:#a0a0a0"></div><div style="position:absolute;left:170px;top:210px;width:137px;height:36px;background:#fff;box-sizing:border-box;border:1px solid #c6c6c6"></div><svg style="position:absolute;left:185px;top:221px" width="16" height="16" viewBox="0 0 16 16"><path d="M1,1 L15,15 M15,1 L1,15" stroke="#b0b0b0" stroke-width="1.6"/></svg><svg style="position:absolute;left:229px;top:221px" width="18" height="16" viewBox="0 0 18 16"><path d="M1,8 L6.5,14 L17,2" stroke="#b0b0b0" stroke-width="2.2" fill="none"/></svg><div style="position:absolute;left:274px;top:218.5px;font-size:19px;line-height:19px;height:19px;color:#555;white-space:nowrap;font-weight:bold;transform:scaleX(1.074);transform-origin:0 50%;font-style:italic;font-family:'Liberation Serif',serif">fx</div><div style="position:absolute;left:310px;top:210px;width:1604px;height:36px;background:#fff;box-sizing:border-box;border:1px solid #c6c6c6"></div><div style="position:absolute;left:325px;top:219.0px;font-size:19px;line-height:19px;height:19px;color:#333;white-space:nowrap;font-weight:normal;transform:scaleX(0.987);transform-origin:0 50%;">=K33-O33</div><svg style="position:absolute;left:1898px;top:226px" width="12" height="8" viewBox="0 0 12 8"><path d="M1,1 L6,6 L11,1" stroke="#666" stroke-width="2.2" fill="none"/></svg><div style="position:absolute;left:1895px;top:258px;width:25px;height:717px;background:#e6e6e6"></div><div style="position:absolute;left:1898px;top:279px;width:19px;height:696px;background:#dadada"></div><div style="position:absolute;left:1894px;top:279px;width:1px;height:697px;background:#a6a6a6"></div><div style="position:absolute;left:0px;top:975px;width:1895px;height:1px;background:#a6a6a6"></div><div style="position:absolute;left:1898px;top:260px;width:19px;height:18px;background:#fff;box-sizing:border-box;border:1px solid #c6c6c6"></div><svg style="position:absolute;left:1902px;top:265px" width="11" height="7"><polygon points="0,6 11,6 5.5,0" fill="#666"/></svg><div style="position:absolute;left:1898px;top:280px;width:19px;height:18px;background:#fff;box-sizing:border-box;border:1px solid #c6c6c6"></div><div style="position:absolute;left:1898px;top:957px;width:19px;height:18px;background:#fff;box-sizing:border-box;border:1px solid #c6c6c6"></div><svg style="position:absolute;left:1902px;top:963px" width="11" height="7"><polygon points="0,0 11,0 5.5,6" fill="#666"/></svg><div style="position:absolute;left:0px;top:975px;width:1920px;height:28px;background:#e6e6e6"></div><div style="position:absolute;left:0px;top:975px;width:1895px;height:1px;background:#c6c6c6"></div><div style="position:absolute;left:0px;top:1002px;width:1920px;height:1px;background:#d0d0d0"></div><svg style="position:absolute;left:26px;top:983px" width="8" height="12"><polygon points="7,0 7,12 0,6" fill="#217346"/></svg><svg style="position:absolute;left:55px;top:983px" width="8" height="12"><polygon points="0,0 0,12 7,6" fill="#217346"/></svg><div style="position:absolute;left:79px;top:990px;width:2px;height:2px;background:#217346"></div><div style="position:absolute;left:84px;top:990px;width:2px;height:2px;background:#217346"></div><div style="position:absolute;left:89px;top:990px;width:2px;height:2px;background:#217346"></div><div style="position:absolute;left:103px;top:978px;width:52px;height:22px;background:#ffff00"></div><div style="position:absolute;left:101px;top:980px;width:1px;height:18px;background:#aaa"></div><div style="position:absolute;left:114px;top:976.5px;font-size:18px;line-height:18px;height:18px;color:#262626;white-space:nowrap;font-weight:normal;transform:scaleX(0.966);transform-origin:0 50%;">RSI</div><div style="position:absolute;left:160px;top:978px;width:138px;height:22px;background:#ffff00"></div><div style="position:absolute;left:158px;top:980px;width:1px;height:18px;background:#aaa"></div><div style="position:absolute;left:173px;top:976.5px;font-size:18px;line-height:18px;height:18px;color:#262626;white-space:nowrap;font-weight:normal;transform:scaleX(0.771);transform-origin:0 50%;">エンベロープ指標</div><div style="position:absolute;left:298px;top:980px;width:1px;height:18px;background:#aaa"></div><div style="position:absolute;left:314px;top:976.5px;font-size:18px;line-height:18px;height:18px;color:#444;white-space:nowrap;font-weight:normal;transform:scaleX(0.875);transform-origin:0 50%;">業種別張り付けば</div><div style="position:absolute;left:456px;top:978px;width:104px;height:22px;background:#ed7d31"></div><div style="position:absolute;left:454px;top:980px;width:1px;height:18px;background:#aaa"></div><div style="position:absolute;left:466px;top:976.5px;font-size:18px;line-height:18px;height:18px;color:#262626;white-space:nowrap;font-weight:normal;transform:scaleX(0.911);transform-origin:0 50%;">業種別株価</div><div style="position:absolute;left:565px;top:978px;width:70px;height:22px;background:#ed7d31"></div><div style="position:absolute;left:563px;top:980px;width:1px;height:18px;background:#aaa"></div><div style="position:absolute;left:574px;top:976.5px;font-size:18px;line-height:18px;height:18px;color:#262626;white-space:nowrap;font-weight:normal;transform:scaleX(0.926);transform-origin:0 50%;">業種別</div><div style="position:absolute;left:640px;top:978px;width:152px;height:22px;background:#ed7d31"></div><div style="position:absolute;left:638px;top:980px;width:1px;height:18px;background:#aaa"></div><div style="position:absolute;left:652px;top:976.5px;font-size:18px;line-height:18px;height:18px;color:#262626;white-space:nowrap;font-weight:normal;transform:scaleX(0.984);transform-origin:0 50%;">20日騰落上位50</div><div style="position:absolute;left:797px;top:978px;width:175px;height:22px;background:#ed7d31"></div><div style="position:absolute;left:795px;top:980px;width:1px;height:18px;background:#aaa"></div><div style="position:absolute;left:810px;top:976.5px;font-size:18px;line-height:18px;height:18px;color:#262626;white-space:nowrap;font-weight:normal;transform:scaleX(0.833);transform-origin:0 50%;">日別と株価による診断</div><div style="position:absolute;left:974px;top:975px;width:113px;height:26px;background:linear-gradient(#fff 0%,#fff 35%,#f4c4a2 100%);box-sizing:border-box;border:1px solid #bdbdbd;border-top:0"></div><div style="position:absolute;left:975px;top:1000px;width:112px;height:2px;background:#217346"></div><div style="position:absolute;left:988px;top:976.5px;font-size:18px;line-height:18px;height:18px;color:#217346;white-space:nowrap;font-weight:normal;transform:scaleX(0.787);transform-origin:0 50%;">累計　データ</div><div style="position:absolute;left:1098px;top:976.5px;font-size:18px;line-height:18px;height:18px;color:#444;white-space:nowrap;font-weight:normal;transform:scaleX(0.685);transform-origin:0 50%;">トレン</div><div style="position:absolute;left:1147px;top:990px;width:2px;height:2px;background:#1e6b3f"></div><div style="position:absolute;left:1152px;top:990px;width:2px;height:2px;background:#1e6b3f"></div><div style="position:absolute;left:1157px;top:990px;width:2px;height:2px;background:#1e6b3f"></div><svg style="position:absolute;left:1170px;top:979px" width="22" height="22" viewBox="0 0 22 22"><circle cx="11" cy="11" r="9.5" fill="none" stroke="#777" stroke-width="1.2"/><path d="M11,5.5 V16.5 M5.5,11 H16.5" stroke="#777" stroke-width="1.4"/></svg><div style="position:absolute;left:1207px;top:983px;width:2px;height:3px;background:#a0a0a0"></div><div style="position:absolute;left:1207px;top:988px;width:2px;height:3px;background:#a0a0a0"></div><div style="position:absolute;left:1207px;top:993px;width:2px;height:3px;background:#a0a0a0"></div><div style="position:absolute;left:1225px;top:979px;width:19px;height:21px;background:#fff;box-sizing:border-box;border:1px solid #c6c6c6"></div><svg style="position:absolute;left:1231px;top:985px" width="6" height="10"><polygon points="6,0 6,10 0,5" fill="#555"/></svg><div style="position:absolute;left:1251px;top:979px;width:22px;height:21px;background:#fff;box-sizing:border-box;border:1px solid #c6c6c6"></div><div style="position:absolute;left:1273px;top:979px;width:622px;height:21px;background:#dadada"></div><div style="position:absolute;left:1876px;top:979px;width:18px;height:21px;background:#fff;box-sizing:border-box;border:1px solid #c6c6c6"></div><svg style="position:absolute;left:1883px;top:985px" width="6" height="10"><polygon points="0,0 0,10 6,5" fill="#555"/></svg><div style="position:absolute;left:0px;top:1003px;width:1920px;height:27px;background:#f3f3f3"></div><div style="position:absolute;left:0px;top:1003px;width:1920px;height:1px;background:#cdcdcd"></div><div style="position:absolute;left:9px;top:1009.5px;font-size:15px;line-height:15px;height:15px;color:#303030;white-space:nowrap;font-weight:normal;transform:scaleX(0.983);transform-origin:0 50%;">準備完了</div><div style="position:absolute;left:1538px;top:1003px;width:50px;height:27px;background:#c8c8c8"></div><svg style="position:absolute;left:1554px;top:1009px" width="18" height="17" viewBox="0 0 18 17"><rect x="0.5" y="0.5" width="17" height="16" fill="none" stroke="#777"/><path d="M6.5,0.5 V16.5 M11.5,0.5 V16.5 M0.5,5.5 H17.5 M0.5,10.5 H17.5" stroke="#777"/></svg><svg style="position:absolute;left:1603px;top:1009px" width="18" height="17" viewBox="0 0 18 17"><rect x="0.5" y="0.5" width="17" height="16" fill="none" stroke="#777"/><rect x="3.5" y="3.5" width="11" height="10" fill="none" stroke="#777"/><path d="M5,6.5 H13 M5,8.5 H13 M5,10.5 H13" stroke="#777"/></svg><svg style="position:absolute;left:1653px;top:1009px" width="18" height="17" viewBox="0 0 18 17"><path d="M0.5,0.5 V16.5 H17.5 V0.5 M0.5,10.5 H9.5 V0.5 M9.5,0.5 H17.5" fill="none" stroke="#777"/></svg><div style="position:absolute;left:1694px;top:1016px;width:10px;height:1.2px;background:#555"></div><div style="position:absolute;left:1712px;top:1016px;width:125px;height:1px;background:#a0a0a0"></div><div style="position:absolute;left:1773px;top:1012px;width:1px;height:8px;background:#a0a0a0"></div><div style="position:absolute;left:1751px;top:1009px;width:5px;height:15px;background:#666"></div><div style="position:absolute;left:1841px;top:1016px;width:10px;height:1.2px;background:#555"></div><div style="position:absolute;left:1845.5px;top:1011px;width:1.2px;height:11px;background:#555"></div><div style="position:absolute;left:1868px;top:1009.5px;font-size:15px;line-height:15px;height:15px;color:#444;white-space:nowrap;font-weight:normal;transform:scaleX(1.066);transform-origin:0 50%;">70%</div><div style="position:absolute;left:0px;top:1030px;width:1920px;height:50px;background:linear-gradient(90deg,#c6d9d3 0px,#cfdccc 60px,#e5e2b8 489px,#ebe5b2 600px,#e4e8c4 800px,#d5e6d6 950px,#cde6de 1150px,#dfe9c8 1320px,#f0eab0 1440px,#e3eac0 1560px,#dde8c6 1610px,#efe9b0 1700px,#e8e8b8 1760px,#cde6dc 1850px,#c7e4e0 1920px)"></div><svg style="position:absolute;left:20px;top:1045px" width="21" height="21" viewBox="0 0 21 21"><path d="M0,3 L9,1.7 V9.7 H0 Z M10,1.5 L21,0 V9.7 H10 Z M0,10.7 H9 V18.7 L0,17.4 Z M10,10.7 H21 V20.5 L10,19 Z" fill="#000"/></svg><div style="position:absolute;left:60px;top:1030px;width:429px;height:50px;background:#fff"></div><svg style="position:absolute;left:75px;top:1044px" width="22" height="22" viewBox="0 0 22 22"><circle cx="13" cy="8.5" r="6.5" fill="none" stroke="#222" stroke-width="1.6"/><path d="M8.5,13 L1.5,20.5" stroke="#222" stroke-width="1.8"/></svg><div style="position:absolute;left:110px;top:1047.0px;font-size:16px;line-height:16px;height:16px;color:#333;white-space:nowrap;font-weight:normal;transform:scaleX(0.972);transform-origin:0 50%;">ここに入力して検索</div><svg style="position:absolute;left:509px;top:1044px" width="22" height="22" viewBox="0 0 22 22"><circle cx="11" cy="11" r="8.5" fill="none" stroke="#111" stroke-width="2.5"/></svg><svg style="position:absolute;left:569px;top:1044px" width="24" height="22" viewBox="0 0 24 22"><path d="M2,2 H14 M2,20 H14 M4,5.5 H12 V16.5 H4 Z M19,1 V5 M19,8 V14 M19,17 V21" stroke="#111" stroke-width="1.6" fill="none"/></svg><svg style="position:absolute;left:628px;top:1040px" width="30" height="30" viewBox="0 0 30 30"><path d="M1,4 H11 L14,7 H28 V25 H1 Z" fill="#f0b93a"/><path d="M1,9 H28 V25 H1 Z" fill="#fcd462"/><path d="M8,16 H22 V26 H18 V20 H12 V26 H8 Z" fill="#2c7bd6"/></svg><svg style="position:absolute;left:690px;top:1039px" width="32" height="32" viewBox="0 0 32 32"><path d="M10,8 V4 A3,3 0 0 1 13,1 H19 A3,3 0 0 1 22,4 V8" fill="none" stroke="#222" stroke-width="2"/><rect x="2" y="8" width="28" height="23" rx="2" fill="#222"/><rect x="10" y="14" width="5" height="5" fill="#f25022"/><rect x="17" y="14" width="5" height="5" fill="#7fba00"/><rect x="10" y="21" width="5" height="5" fill="#00a4ef"/><rect x="17" y="21" width="5" height="5" fill="#ffb900"/></svg><svg style="position:absolute;left:752px;top:1040px" width="32" height="30" viewBox="0 0 32 30"><path d="M1,12 L16,1 L31,12 V28 H1 Z" fill="#0f6cbd"/><path d="M1,12 L16,22 L31,12 V28 H1 Z" fill="#28a8ea"/><path d="M5,10 L16,3 L27,10 L16,17 Z" fill="#fff"/></svg><div style="position:absolute;left:815px;top:1040px;width:30px;height:30px;background:#f05a28"></div><svg style="position:absolute;left:815px;top:1040px" width="30" height="30" viewBox="0 0 30 30"><circle cx="15" cy="15" r="10" fill="none" stroke="#fff" stroke-width="2.5"/><circle cx="15" cy="14" r="4" fill="#fff"/><path d="M8,23 C10,18 20,18 22,23" fill="#fff"/></svg><svg style="position:absolute;left:876px;top:1040px" width="30" height="30" viewBox="0 0 30 30"><rect x="1" y="1" width="28" height="28" rx="4" fill="#2355d8"/><text x="15" y="18" font-size="16" fill="#fff" text-anchor="middle" font-family="Liberation Sans">@</text><text x="15" y="26" font-size="6" fill="#fff" text-anchor="middle" font-family="Liberation Sans">menu</text></svg><svg style="position:absolute;left:938px;top:1039px" width="32" height="32" viewBox="0 0 32 32"><defs><linearGradient id="eg" x1="0" y1="0.2" x2="1" y2="0.7"><stop offset="0" stop-color="#1b86d6"/><stop offset="0.55" stop-color="#2bbad3"/><stop offset="1" stop-color="#62dd55"/></linearGradient></defs><circle cx="16" cy="16" r="14.5" fill="url(#eg)"/><path d="M1.5,16 C1.5,10 6,6.5 11,7 C7,9 6,14 8,19 C10,24 17,27 26,24 C23,28 19,30.5 16,30.5 C8,30.5 1.5,24 1.5,16 Z" fill="#1c5fb2"/><path d="M15,17 C19,18 24,20 31,18 L31,24 C26,25 20,23 16,21 Z" fill="#d5e6d6"/><circle cx="14.5" cy="16.5" r="3.3" fill="#d5e6d6"/></svg><div style="position:absolute;left:1001px;top:1040px;width:30px;height:30px;background:#e3effc;box-shadow:inset 0 0 0 1px #c9def5"></div><svg style="position:absolute;left:1002px;top:1044px" width="28" height="22" viewBox="0 0 28 22"><rect x="5" y="1.5" width="18" height="13" rx="1" fill="#eef3fb" stroke="#3b7be0" stroke-width="2"/><path d="M9.5,8 L13,11 L19,5" stroke="#1a9bb5" stroke-width="2" fill="none"/><path d="M1,17 H27 L25.5,20 H2.5 Z" fill="#3b7be0"/><rect x="11.5" y="17.5" width="5" height="1" fill="#a9c8f5"/></svg><div style="position:absolute;left:1048px;top:1030px;width:61px;height:50px;background:rgba(255,255,255,0.55)"></div><svg style="position:absolute;left:1062px;top:1040px" width="32" height="30" viewBox="0 0 32 30"><rect x="8" y="1" width="22" height="28" rx="1.5" fill="#185c37"/><rect x="8" y="1" width="22" height="7" fill="#21a366"/><rect x="19" y="1" width="11" height="7" fill="#33c481"/><rect x="8" y="8" width="22" height="7" fill="#107c41"/><rect x="19" y="8" width="11" height="7" fill="#21a366"/><rect x="8" y="15" width="22" height="7" fill="#107c41"/><rect x="1" y="7" width="15" height="15" rx="1.5" fill="#107c41"/><text x="8.5" y="18.5" font-size="11" fill="#fff" text-anchor="middle" font-family="Liberation Sans" font-weight="bold">X</text></svg><div style="position:absolute;left:929px;top:1077px;width:51px;height:3px;background:#0078d4"></div><div style="position:absolute;left:991px;top:1077px;width:51px;height:3px;background:#0078d4"></div><div style="position:absolute;left:1048px;top:1077px;width:61px;height:3px;background:#0078d4"></div><svg style="position:absolute;left:1590px;top:1048px" width="18" height="12"><path d="M1,10 L9,2 L17,10" stroke="#111" stroke-width="1.6" fill="none"/></svg><svg style="position:absolute;left:1618px;top:1046px" width="22" height="16" viewBox="0 0 22 16"><path d="M4,14 A4,4 0 0 1 4,6 A6,6 0 0 1 15,4 A5,5 0 0 1 18,14 Z" fill="#c8c8c8" stroke="#333" stroke-width="1.2"/></svg><svg style="position:absolute;left:1648px;top:1046px" width="22" height="16" viewBox="0 0 22 16"><rect x="4" y="4" width="15" height="9" fill="#111"/><rect x="19" y="6" width="2" height="5" fill="#111"/><path d="M2,1 V6 M0,3 H4" stroke="#111" stroke-width="1.2"/></svg><svg style="position:absolute;left:1680px;top:1045px" width="20" height="18" viewBox="0 0 20 18"><path d="M2,16 A14,14 0 0 1 16,2 M6,16 A10,10 0 0 1 16,6 M10,16 A6,6 0 0 1 16,10" stroke="#111" stroke-width="1.4" fill="none"/><circle cx="15.5" cy="15.5" r="1.6" fill="#111"/></svg><svg style="position:absolute;left:1707px;top:1045px" width="22" height="18" viewBox="0 0 22 18"><path d="M1,6 H5 L10,1 V17 L5,12 H1 Z" fill="none" stroke="#111" stroke-width="1.3"/><path d="M13,6 A4,4 0 0 1 13,12 M15.5,4 A7,7 0 0 1 15.5,14" stroke="#111" stroke-width="1.3" fill="none"/><path d="M18,2 A10,10 0 0 1 18,16" stroke="#999" stroke-width="1.3" fill="none"/></svg><div style="position:absolute;left:1739px;top:1044.0px;font-size:22px;line-height:22px;height:22px;color:#111;white-space:nowrap;font-weight:normal;">A</div><div style="position:absolute;left:1789px;top:1037.0px;font-size:14px;line-height:14px;height:14px;color:#111;white-space:nowrap;font-weight:normal;transform:scaleX(1.027);transform-origin:0 50%;">20:51</div><div style="position:absolute;left:1770px;top:1059.0px;font-size:14px;line-height:14px;height:14px;color:#111;white-space:nowrap;font-weight:normal;transform:scaleX(1.085);transform-origin:0 50%;">2021/06/08</div><svg style="position:absolute;left:1866px;top:1043px" width="40" height="36" viewBox="0 0 40 36"><rect x="3" y="2" width="20" height="17" fill="#000"/><polygon points="6,19 11,19 7,24" fill="#000"/><path d="M6.5,6.5 H19.5 M6.5,10 H19.5 M6.5,13.5 H16" stroke="#fff" stroke-width="1.2"/><circle cx="22.5" cy="22.5" r="10" fill="#d4d4d4" stroke="#9a9a9a" stroke-width="1"/><text x="22.5" y="28" font-size="15" fill="#000" text-anchor="middle" font-family="Liberation Sans">1</text></svg><div style="position:absolute;left:1914px;top:1030px;width:1px;height:50px;background:#9fb5b3"></div></body></html>
